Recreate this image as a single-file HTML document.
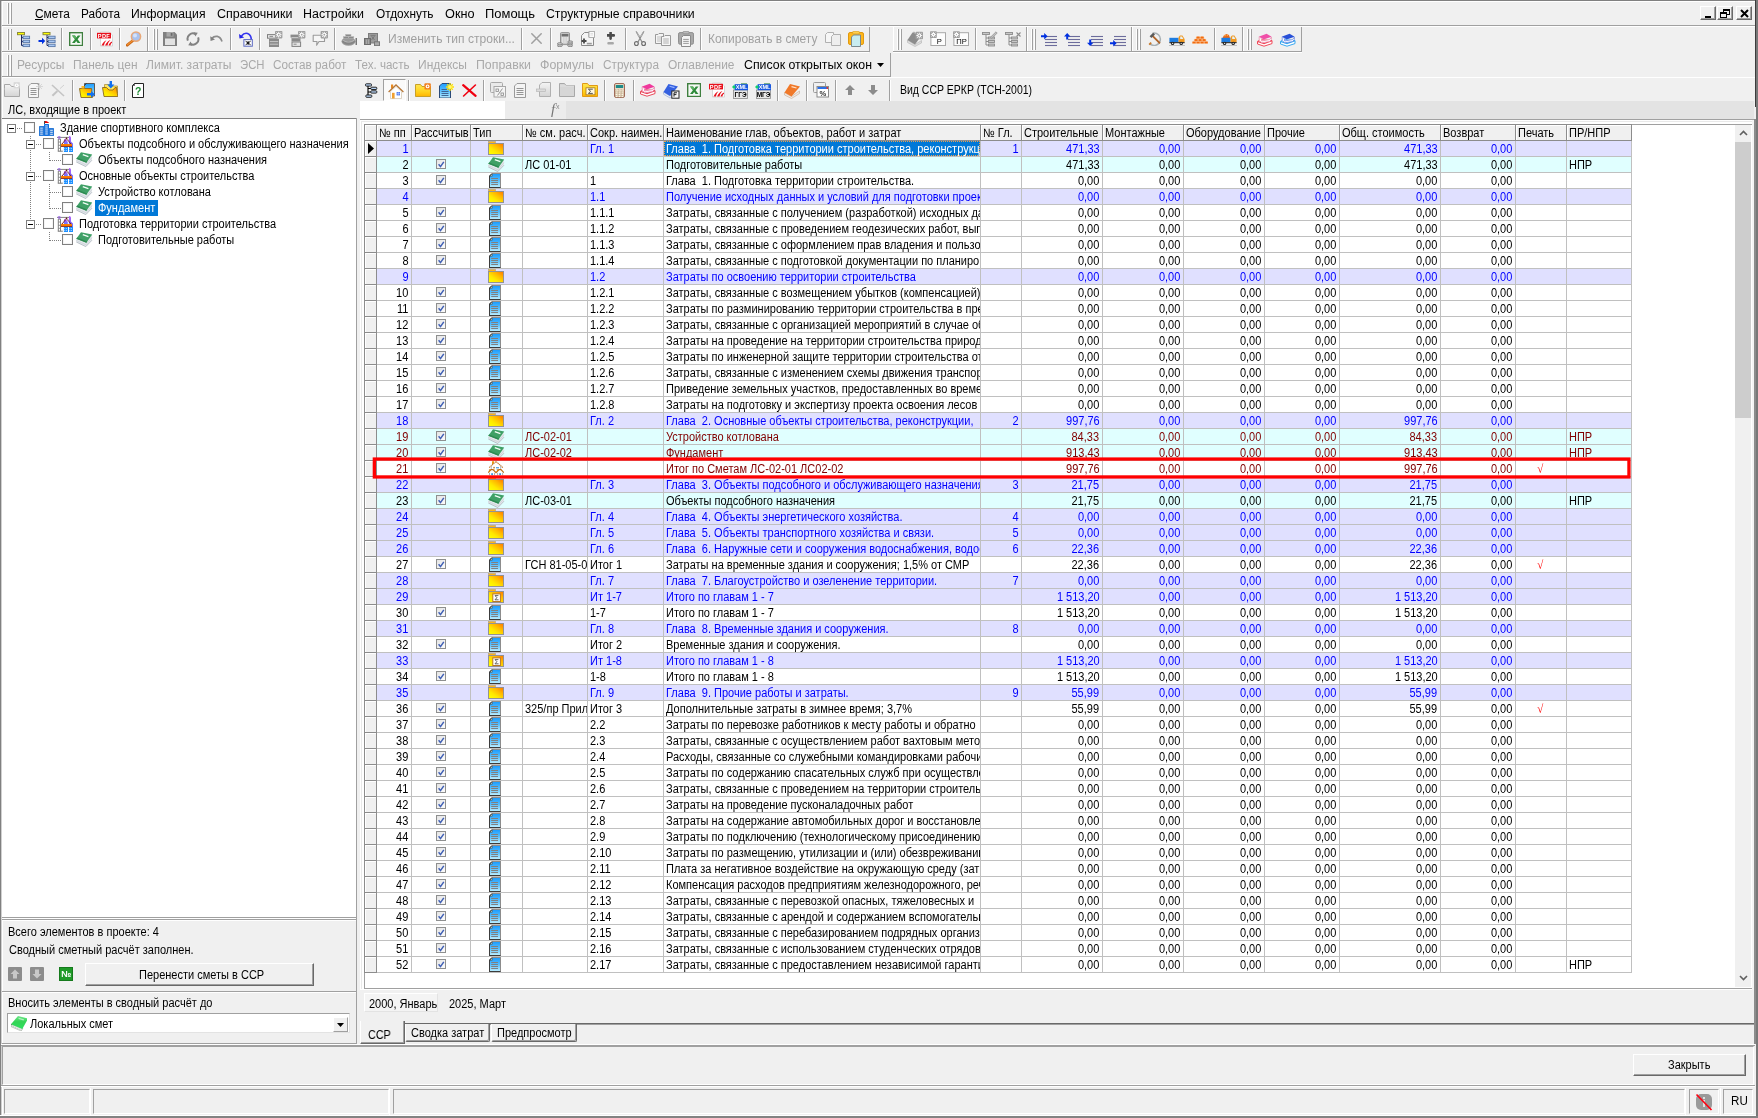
<!DOCTYPE html><html><head><meta charset="utf-8"><title>SSR</title><style>
*{margin:0;padding:0;box-sizing:border-box}
html,body{width:1758px;height:1118px;overflow:hidden;background:#f0f0f0}
body{position:relative;font-family:"Liberation Sans",sans-serif;font-size:12px;color:#000}
div,i,span.t,svg{position:absolute;display:block}
span.t{white-space:pre;transform-origin:0 50%}
span.r{transform-origin:100% 50%}
.c{overflow:hidden}
.ce{width:11px;height:11px;border:1px solid #808080;background:#fff;box-shadow:inset 0 0 0 1px #f4f4f4}
.ex{width:9px;height:9px;border:1px solid #808080;background:#fff}
.rw{left:364px;width:1268px;height:15px}.rw>div{top:0;height:15px;overflow:hidden}.rw span{position:absolute;display:block;top:.5px;font-size:12px;line-height:15px;white-space:pre;transform:scaleX(0.917)}.rw .l{left:1.5px;transform-origin:0 50%}.rw .r{right:2.5px;transform-origin:100% 50%}.rb{background:#e0e0ff;color:#00f}.ry{background:#e0ffff}.rm{color:#800000}.rwh{background:#fff}.ind{left:1px;top:0;width:11px;height:15px;background:#f0f0f0;border-top:1px solid #fff;border-left:1px solid #fff}.hl{left:0;top:15px;width:13px;height:1px;background:#8c8c8c}.gl{left:13px;top:15px;width:1255px;height:1px;background:#c0c0c0}.sq{position:absolute;display:block;left:1173px;top:1px;font-family:"Liberation Serif",serif;font-size:10px;line-height:14px;color:#f00}.k1{left:13px;width:34px}.k2{left:48px;width:58px}.k3{left:107px;width:51px}.k4{left:159px;width:64px}.k5{left:224px;width:75px}.k6{left:300px;width:316px}.k7{left:617px;width:40px}.k8{left:658px;width:80px}.k9{left:739px;width:80px}.k10{left:820px;width:80px}.k11{left:901px;width:74px}.k12{left:976px;width:100px}.k13{left:1077px;width:74px}.k14{left:1152px;width:50px}.k15{left:1203px;width:64px}</style></head><body>
<svg width="0" height="0" style="left:0;top:0"><defs><linearGradient id="gF" x1="0" y1="1" x2="1" y2="0"><stop offset="0" stop-color="#ffff00"/><stop offset="0.35" stop-color="#ffe800"/><stop offset="0.7" stop-color="#ffb400"/><stop offset="1" stop-color="#ff7a00"/></linearGradient><linearGradient id="gS" x1="0" y1="1" x2="1" y2="0"><stop offset="0" stop-color="#ffe860"/><stop offset="1" stop-color="#ffb020"/></linearGradient><linearGradient id="gD" x1="0" y1="0" x2="0" y2="1"><stop offset="0" stop-color="#1c9cff"/><stop offset="0.5" stop-color="#58c0ff"/><stop offset="1" stop-color="#b8ecff"/></linearGradient><linearGradient id="gC" x1="0" y1="0" x2="1" y2="1"><stop offset="0" stop-color="#e2e2e2"/><stop offset="1" stop-color="#fefefe"/></linearGradient><linearGradient id="gP" x1="0" y1="0" x2="0" y2="1"><stop offset="0" stop-color="#b45cf8"/><stop offset="1" stop-color="#6a78ff"/></linearGradient><linearGradient id="gBL" x1="0" y1="0" x2="0" y2="1"><stop offset="0" stop-color="#6ee88a"/><stop offset="0.45" stop-color="#34d455"/><stop offset="1" stop-color="#2fe060"/></linearGradient><linearGradient id="gGy" x1="0" y1="0" x2="0" y2="1"><stop offset="0" stop-color="#f4f4f4"/><stop offset="1" stop-color="#d4d4d4"/></linearGradient><linearGradient id="gYf" x1="0" y1="0" x2="0" y2="1"><stop offset="0" stop-color="#ffe650"/><stop offset="0.6" stop-color="#ffd21e"/><stop offset="1" stop-color="#ffb400"/></linearGradient></defs><symbol id="iBld" viewBox="0 0 15 15"><path d="M5.5 0V3" stroke="#333" stroke-width="0.9"/><path d="M6 0.2C8 -0.2 9 1 10.2 2.1H6Z" fill="#e40000"/><rect x="5" y="3" width="5" height="12" rx="0.6" fill="#1070e0"/><rect x="0" y="4.9" width="5.4" height="10.1" rx="0.6" fill="#2a7ad8"/><rect x="9.6" y="6.9" width="5.4" height="8.1" rx="0.6" fill="#2a7ad8"/><g fill="#ccdcf4"><rect x="6.2" y="4.4" width="2.6" height="1.1"/><rect x="6.2" y="6.4" width="2.6" height="1.1"/><rect x="6.2" y="8.4" width="2.6" height="1.1"/><rect x="6.2" y="10.4" width="2.6" height="1.1"/><rect x="6.2" y="12.4" width="2.6" height="1.1"/><rect x="1.2" y="6.6" width="2.6" height="1.1"/><rect x="1.2" y="8.6" width="2.6" height="1.1"/><rect x="1.2" y="10.6" width="2.6" height="1.1"/><rect x="1.2" y="12.6" width="2.6" height="1.1"/><rect x="11.2" y="8.8" width="2.6" height="1.1"/><rect x="11.2" y="10.8" width="2.6" height="1.1"/><rect x="11.2" y="12.8" width="2.6" height="1.1"/></g></symbol><symbol id="iObj" viewBox="0 0 16 16"><path d="M1.3 3V15.3M3.5 3V15.3" stroke="#808080" stroke-width="1"/><path d="M0.8 15.2H5.8" stroke="#808080" stroke-width="1.1"/><path d="M1.3 3.2H3.5M1.3 6H3.5M1.3 9.3H3.5M1.3 12.3H3.5" stroke="#808080" stroke-width="0.9"/><path d="M0 1.4H12.5" stroke="#808080" stroke-width="1"/><circle cx="2.3" cy="1.5" r="1.1" fill="none" stroke="#9a5cf0" stroke-width="0.9"/><path d="M12 0.2L13 0L14 1.5V5.6L16 7.4V11H11.8Z" fill="url(#gP)"/><path d="M7 3.6L8 3L9.5 4L10.8 6V8H7Z" fill="url(#gP)"/><path d="M9.5 1.6V2.6M9.5 2.4L5 7.9M9.5 2.4L14 7.9" stroke="#6a1420" stroke-width="1.1" stroke-dasharray="1 0.5" fill="none"/><rect x="4" y="8" width="11" height="2.2" fill="#ff7e00"/><rect x="4" y="9.9" width="11" height="1" fill="#8a2a1a"/><rect x="6.9" y="11" width="4.1" height="5" fill="#1e90ff"/><rect x="12" y="11" width="4" height="5" fill="#1e90ff"/><g fill="#d8ecff"><rect x="7.4" y="12.2" width="0.8" height="0.8"/><rect x="7.4" y="14.1" width="0.8" height="0.8"/><rect x="9.2" y="12.2" width="0.8" height="0.8"/><rect x="9.2" y="14.1" width="0.8" height="0.8"/><rect x="12.5" y="12.2" width="0.8" height="0.8"/><rect x="12.5" y="14.1" width="0.8" height="0.8"/><rect x="14.2" y="12.2" width="0.8" height="0.8"/><rect x="14.2" y="14.1" width="0.8" height="0.8"/></g></symbol><symbol id="iBkG" viewBox="0 0 17 15"><path d="M0.3 6.8V10L9.8 14.6L16 8.2V2.6L10.4 10.6Z" fill="#e4e8ec"/><path d="M0.3 10L9.8 14.6L16 8.2" stroke="#b4bcc4" stroke-width="0.9" fill="none"/><path d="M0.3 8.4L9.9 12.8L16 5.6" stroke="#c8d0d6" stroke-width="0.7" fill="none"/><path d="M0.3 6.8L5 0.2L16.2 2.4L10.4 10.8Z" fill="#3fa066"/><path d="M0.3 6.8L10.4 10.8L11.2 9.6L1.2 5.6Z" fill="#2e8a52"/><path d="M6.8 2.6L12.4 4.6" stroke="#f4fff8" stroke-width="1.3"/></symbol><symbol id="iBkC" viewBox="0 0 16 15"><path d="M0 8.2V10.6L10.2 15L11.8 12.6Z" fill="#eef2ee" stroke="#8a968a" stroke-width="0.5"/><path d="M0.4 9.6L10.3 13.8" stroke="#9ab09a" stroke-width="0.6" stroke-dasharray="1.2 0.8"/><path d="M7 0L16 2.2V4.6L11.3 12.9L0 8.2Z" fill="url(#gBL)"/><path d="M0 8.2L0.3 9L1 8.6Z" fill="#1a3a1a"/><path d="M7.6 2.4L12.8 3.8" stroke="#b4f0c0" stroke-width="1.3"/></symbol><symbol id="iFld" viewBox="0 0 16 14"><rect x="0.5" y="0.5" width="7" height="2" fill="#ffb31a" stroke="#b0a078" stroke-width="0.6"/><rect x="0" y="2" width="16" height="12" fill="#939393"/><rect x="1" y="3" width="14" height="10" fill="url(#gF)"/></symbol><symbol id="iChk" viewBox="0 0 10 10"><rect x="0.5" y="0.5" width="9" height="9" fill="url(#gC)" stroke="#8e8f8f" stroke-width="1"/><path d="M2.6 5.2L4.5 7.6L7.8 2.8" stroke="#3f5fb4" stroke-width="1.5" fill="none"/></symbol><symbol id="iDoc" viewBox="0 0 12 15"><path d="M0 3L3 0H12V15H0Z" fill="#8c8c8c"/><path d="M0 3L2.5 0.5V15H0ZM0 14H11.5V15H0Z" fill="#3c3c3c"/><path d="M1 3.5L3.5 1H11V14H1Z" fill="url(#gD)"/><path d="M0.8 3.2L3.2 0.8V3.2Z" fill="#c8f4f4" stroke="#3c3c3c" stroke-width="0.6"/><g fill="#808080"><rect x="2.2" y="5" width="6.8" height="1"/><rect x="2.2" y="7" width="6.8" height="1"/><rect x="2.2" y="9" width="6.8" height="1"/><rect x="2.2" y="11" width="6.8" height="1"/></g></symbol><symbol id="iHs" viewBox="0 0 16 15"><path d="M4 0.2H6V2.2L4 3.8Z" fill="#e89a10"/><path d="M2.8 5.2L8 0.6L13.2 5.2V9H2.8Z" fill="#fff"/><path d="M1.2 6.6L8 0.4L14.8 6.6" stroke="#c07830" stroke-width="1.1" stroke-dasharray="1.4 0.5" fill="none"/><path d="M3.3 5V8.4M12.6 5V8.4" stroke="#a8b4bc" stroke-width="0.9"/><rect x="8" y="6" width="3" height="1" fill="#62a8e0"/><rect x="8" y="7" width="3" height="1.6" fill="#b8dcf4"/><rect x="5.2" y="5.9" width="1.8" height="0.9" fill="#a0602a"/><rect x="5.2" y="6.8" width="1.8" height="2.2" fill="#f0d4a8"/><path d="M1.4 11.4V14.4H6.6V11.4L5 8.8H3ZM9.4 11.4V14.4H14.6V11.4L13 8.8H11Z" fill="#fff"/><path d="M0.2 11.7L3 8.6H5L8 11.7L11 8.6H13L15.9 11.7" stroke="#c06a10" stroke-width="1.2" fill="none"/><path d="M1.4 8.4V10.4L2.8 9.2ZM9.4 8.4V10.4L10.8 9.2Z" fill="#e08a10" stroke="#d07a10" stroke-width="0.6"/><path d="M1.5 11.8V14.3M6.5 11.8V14.3M9.6 11.8V14.3M14.6 11.8V14.3" stroke="#98a8b0" stroke-width="0.9"/><rect x="3.2" y="12.2" width="1.8" height="2" fill="#3a9ae0"/><rect x="11.2" y="12.2" width="1.8" height="2" fill="#3a9ae0"/></symbol><symbol id="iFSum" viewBox="0 0 16 14"><rect x="0.5" y="0.5" width="7" height="2" fill="#ffb31a" stroke="#b0a078" stroke-width="0.6"/><rect x="0" y="2" width="16" height="12" fill="#939393"/><rect x="1" y="3" width="14" height="10" fill="url(#gF)"/><rect x="4.8" y="4.9" width="7.6" height="7.6" fill="#fff" stroke="#b87828" stroke-width="1"/><path d="M10.4 6.6H7L8.9 8.7L7 10.8H10.6" stroke="#555" stroke-width="0.9" fill="none"/></symbol></svg>
<div id="w" style="left:0;top:0;width:1758px;height:1118px;will-change:transform">
<i style="left:0px;top:0px;width:1758px;height:1px;background:#808080"></i>
<i style="left:0px;top:0px;width:1px;height:1118px;background:#808080"></i>
<i style="left:1px;top:1px;width:1px;height:1115px;background:#d0d0d0"></i>
<div style="left:1756px;top:0px;width:2px;height:1118px;background:#787878"></div>
<i style="left:1755px;top:0px;width:1px;height:107px;background:#3c3c3c"></i>
<div style="left:1754px;top:119px;width:2px;height:925px;background:#8c8c8c"></div>
<i style="left:0px;top:1115px;width:1756px;height:1px;background:#fff"></i>
<div style="left:0px;top:1116px;width:1758px;height:2px;background:#828282"></div>
<i style="left:2px;top:1px;width:1753px;height:1px;background:#fff"></i>
<i style="left:2px;top:1px;width:1px;height:1115px;background:#fff"></i>
<i style="left:7px;top:3px;width:1px;height:21px;background:#fff"></i><i style="left:8px;top:3px;width:1px;height:21px;background:#a0a0a0"></i><i style="left:10px;top:3px;width:1px;height:21px;background:#fff"></i><i style="left:11px;top:3px;width:1px;height:21px;background:#a0a0a0"></i>
<i style="left:2px;top:25px;width:1753px;height:1px;background:#a0a0a0"></i>
<i style="left:2px;top:26px;width:1753px;height:1px;background:#fff"></i>
<span class="t" style="left:34.5px;top:6px;font-size:12.5px;line-height:16px;color:#000;transform:scaleX(0.954);">Смета</span>
<span class="t" style="left:80.5px;top:6px;font-size:12.5px;line-height:16px;color:#000;transform:scaleX(0.946);">Работа</span>
<span class="t" style="left:130.5px;top:6px;font-size:12.5px;line-height:16px;color:#000;transform:scaleX(0.973);">Информация</span>
<span class="t" style="left:216.5px;top:6px;font-size:12.5px;line-height:16px;color:#000;transform:scaleX(0.997);">Справочники</span>
<span class="t" style="left:303.0px;top:6px;font-size:12.5px;line-height:16px;color:#000;transform:scaleX(0.995);">Настройки</span>
<span class="t" style="left:375.5px;top:6px;font-size:12.5px;line-height:16px;color:#000;transform:scaleX(0.946);">Отдохнуть</span>
<span class="t" style="left:444.5px;top:6px;font-size:12.5px;line-height:16px;color:#000;transform:scaleX(1.016);">Окно</span>
<span class="t" style="left:485.0px;top:6px;font-size:12.5px;line-height:16px;color:#000;transform:scaleX(1.036);">Помощь</span>
<span class="t" style="left:546.0px;top:6px;font-size:12.5px;line-height:16px;color:#000;transform:scaleX(0.98);">Структурные справочники</span>
<i style="left:35px;top:19px;width:8px;height:1px;background:#000"></i>
<div style="left:1700px;top:6px;width:16px;height:14px;background:#f0f0f0;border:1px solid;border-color:#fff #696969 #696969 #fff;box-shadow:inset -1px -1px 0 #a0a0a0"><i style="left:4px;top:9px;width:6px;height:2px;background:#000"></i></div>
<div style="left:1717px;top:6px;width:16px;height:14px;background:#f0f0f0;border:1px solid;border-color:#fff #696969 #696969 #fff;box-shadow:inset -1px -1px 0 #a0a0a0"><i style="left:5px;top:2px;width:7px;height:6px;border:1px solid #000;border-top-width:2px"></i><i style="left:2px;top:5px;width:7px;height:6px;border:1px solid #000;border-top-width:2px;background:#f0f0f0"></i></div>
<div style="left:1736px;top:6px;width:16px;height:14px;background:#f0f0f0;border:1px solid;border-color:#fff #696969 #696969 #fff;box-shadow:inset -1px -1px 0 #a0a0a0"><svg style="left:3px;top:2px" width="9" height="9" viewBox="0 0 9 9"><path d="M1 1L8 8M8 1L1 8" stroke="#000" stroke-width="2"/></svg></div>
<i style="left:2px;top:51px;width:867px;height:1px;background:#a0a0a0"></i>
<i style="left:2px;top:52px;width:867px;height:1px;background:#fff"></i>
<i style="left:7px;top:29px;width:1px;height:21px;background:#fff"></i><i style="left:8px;top:29px;width:1px;height:21px;background:#a0a0a0"></i><i style="left:10px;top:29px;width:1px;height:21px;background:#fff"></i><i style="left:11px;top:29px;width:1px;height:21px;background:#a0a0a0"></i>
<i style="left:147px;top:27px;width:1px;height:24px;background:#a0a0a0"></i>
<i style="left:148px;top:27px;width:1px;height:24px;background:#fff"></i>
<i style="left:153px;top:29px;width:1px;height:21px;background:#fff"></i><i style="left:154px;top:29px;width:1px;height:21px;background:#a0a0a0"></i><i style="left:156px;top:29px;width:1px;height:21px;background:#fff"></i><i style="left:157px;top:29px;width:1px;height:21px;background:#a0a0a0"></i>
<i style="left:869px;top:27px;width:1px;height:25px;background:#a0a0a0"></i>
<i style="left:893px;top:27px;width:1px;height:25px;background:#fff"></i>
<i style="left:893px;top:51px;width:409px;height:1px;background:#a0a0a0"></i>
<i style="left:893px;top:52px;width:409px;height:1px;background:#fff"></i>
<i style="left:897px;top:29px;width:1px;height:21px;background:#fff"></i><i style="left:898px;top:29px;width:1px;height:21px;background:#a0a0a0"></i><i style="left:900px;top:29px;width:1px;height:21px;background:#fff"></i><i style="left:901px;top:29px;width:1px;height:21px;background:#a0a0a0"></i>
<i style="left:1026px;top:27px;width:1px;height:24px;background:#a0a0a0"></i>
<i style="left:1027px;top:27px;width:1px;height:24px;background:#fff"></i>
<i style="left:1031px;top:29px;width:1px;height:21px;background:#fff"></i><i style="left:1032px;top:29px;width:1px;height:21px;background:#a0a0a0"></i><i style="left:1034px;top:29px;width:1px;height:21px;background:#fff"></i><i style="left:1035px;top:29px;width:1px;height:21px;background:#a0a0a0"></i>
<i style="left:1131px;top:27px;width:1px;height:24px;background:#a0a0a0"></i>
<i style="left:1132px;top:27px;width:1px;height:24px;background:#fff"></i>
<i style="left:1136px;top:29px;width:1px;height:21px;background:#fff"></i><i style="left:1137px;top:29px;width:1px;height:21px;background:#a0a0a0"></i><i style="left:1139px;top:29px;width:1px;height:21px;background:#fff"></i><i style="left:1140px;top:29px;width:1px;height:21px;background:#a0a0a0"></i>
<i style="left:1242px;top:27px;width:1px;height:24px;background:#a0a0a0"></i>
<i style="left:1243px;top:27px;width:1px;height:24px;background:#fff"></i>
<i style="left:1247px;top:29px;width:1px;height:21px;background:#fff"></i><i style="left:1248px;top:29px;width:1px;height:21px;background:#a0a0a0"></i><i style="left:1250px;top:29px;width:1px;height:21px;background:#fff"></i><i style="left:1251px;top:29px;width:1px;height:21px;background:#a0a0a0"></i>
<i style="left:1301px;top:27px;width:1px;height:25px;background:#a0a0a0"></i>
<i style="left:61px;top:28px;width:1px;height:22px;background:#a0a0a0"></i><i style="left:62px;top:28px;width:1px;height:22px;background:#fff"></i>
<i style="left:90px;top:28px;width:1px;height:22px;background:#a0a0a0"></i><i style="left:91px;top:28px;width:1px;height:22px;background:#fff"></i>
<i style="left:119px;top:28px;width:1px;height:22px;background:#a0a0a0"></i><i style="left:120px;top:28px;width:1px;height:22px;background:#fff"></i>
<i style="left:230px;top:28px;width:1px;height:22px;background:#a0a0a0"></i><i style="left:231px;top:28px;width:1px;height:22px;background:#fff"></i>
<i style="left:259px;top:28px;width:1px;height:22px;background:#a0a0a0"></i><i style="left:260px;top:28px;width:1px;height:22px;background:#fff"></i>
<i style="left:334px;top:28px;width:1px;height:22px;background:#a0a0a0"></i><i style="left:335px;top:28px;width:1px;height:22px;background:#fff"></i>
<i style="left:521px;top:28px;width:1px;height:22px;background:#a0a0a0"></i><i style="left:522px;top:28px;width:1px;height:22px;background:#fff"></i>
<i style="left:550px;top:28px;width:1px;height:22px;background:#a0a0a0"></i><i style="left:551px;top:28px;width:1px;height:22px;background:#fff"></i>
<i style="left:625px;top:28px;width:1px;height:22px;background:#a0a0a0"></i><i style="left:626px;top:28px;width:1px;height:22px;background:#fff"></i>
<i style="left:700px;top:28px;width:1px;height:22px;background:#a0a0a0"></i><i style="left:701px;top:28px;width:1px;height:22px;background:#fff"></i>
<i style="left:975px;top:28px;width:1px;height:22px;background:#a0a0a0"></i><i style="left:976px;top:28px;width:1px;height:22px;background:#fff"></i>
<i style="left:1214px;top:28px;width:1px;height:22px;background:#a0a0a0"></i><i style="left:1215px;top:28px;width:1px;height:22px;background:#fff"></i>
<span class="t" style="left:387.5px;top:31px;font-size:12.5px;line-height:16px;color:#a0a0a0;transform:scaleX(0.965);">Изменить тип строки...</span>
<span class="t" style="left:708px;top:31px;font-size:12.5px;line-height:16px;color:#a0a0a0;transform:scaleX(0.957);">Копировать в смету</span>
<i style="left:7px;top:55px;width:1px;height:21px;background:#fff"></i><i style="left:8px;top:55px;width:1px;height:21px;background:#a0a0a0"></i><i style="left:10px;top:55px;width:1px;height:21px;background:#fff"></i><i style="left:11px;top:55px;width:1px;height:21px;background:#a0a0a0"></i>
<i style="left:2px;top:76px;width:888px;height:1px;background:#a0a0a0"></i>
<i style="left:2px;top:77px;width:1753px;height:1px;background:#fff"></i>
<i style="left:890px;top:53px;width:1px;height:24px;background:#a0a0a0"></i>
<span class="t" style="left:16.5px;top:57px;font-size:12.5px;line-height:16px;color:#a9a9a9;transform:scaleX(0.964);">Ресурсы</span>
<span class="t" style="left:72.5px;top:57px;font-size:12.5px;line-height:16px;color:#a9a9a9;transform:scaleX(0.955);">Панель цен</span>
<span class="t" style="left:145.5px;top:57px;font-size:12.5px;line-height:16px;color:#a9a9a9;transform:scaleX(0.966);">Лимит. затраты</span>
<span class="t" style="left:239.5px;top:57px;font-size:12.5px;line-height:16px;color:#a9a9a9;transform:scaleX(0.906);">ЭСН</span>
<span class="t" style="left:272.5px;top:57px;font-size:12.5px;line-height:16px;color:#a9a9a9;transform:scaleX(0.938);">Состав работ</span>
<span class="t" style="left:354.5px;top:57px;font-size:12.5px;line-height:16px;color:#a9a9a9;transform:scaleX(0.928);">Тех. часть</span>
<span class="t" style="left:417.5px;top:57px;font-size:12.5px;line-height:16px;color:#a9a9a9;transform:scaleX(0.961);">Индексы</span>
<span class="t" style="left:475.5px;top:57px;font-size:12.5px;line-height:16px;color:#a9a9a9;transform:scaleX(0.987);">Поправки</span>
<span class="t" style="left:539.5px;top:57px;font-size:12.5px;line-height:16px;color:#a9a9a9;transform:scaleX(0.993);">Формулы</span>
<span class="t" style="left:602.5px;top:57px;font-size:12.5px;line-height:16px;color:#a9a9a9;transform:scaleX(0.944);">Структура</span>
<span class="t" style="left:667.5px;top:57px;font-size:12.5px;line-height:16px;color:#a9a9a9;transform:scaleX(0.954);">Оглавление</span>
<span class="t" style="left:744px;top:57px;font-size:12.5px;line-height:16px;color:#000;transform:scaleX(0.987);">Список открытых окон</span>
<svg style="left:877px;top:63px" width="7" height="4" viewBox="0 0 7 4"><path d="M0 0H7L3.5 4Z" fill="#000"/></svg>
<span class="t" style="left:8px;top:103px;font-size:12px;line-height:15px;color:#000;transform:scaleX(0.917);">ЛС, входящие в проект</span>
<div style="left:2px;top:118px;width:355px;height:800px;background:#fff;border:1px solid #828282;border-left:0;border-bottom-color:#a0a0a0"></div>
<i class="ex" style="left:7px;top:124px"></i><i style="left:9px;top:128px;width:5px;height:1px;background:#000"></i>
<i style="left:17px;top:128px;width:6px;height:1px;background:repeating-linear-gradient(90deg,#808080 0 1px,transparent 1px 2px)"></i>
<i class="ce" style="left:24px;top:122px"></i>
<svg style="left:39px;top:121px" width="15" height="15"><use href="#iBld"/></svg>
<span class="t" style="left:60px;top:121px;font-size:12px;line-height:15px;color:#000;transform:scaleX(0.917);">Здание спортивного комплекса</span>
<i class="ex" style="left:26px;top:140px"></i><i style="left:28px;top:144px;width:5px;height:1px;background:#000"></i>
<i style="left:36px;top:144px;width:6px;height:1px;background:repeating-linear-gradient(90deg,#808080 0 1px,transparent 1px 2px)"></i>
<i class="ce" style="left:43px;top:138px"></i>
<svg style="left:57px;top:136px" width="16" height="16"><use href="#iObj"/></svg>
<span class="t" style="left:78.5px;top:137px;font-size:12px;line-height:15px;color:#000;transform:scaleX(0.917);">Объекты подсобного и обслуживающего назначения</span>
<i style="left:50px;top:160px;width:11px;height:1px;background:repeating-linear-gradient(90deg,#808080 0 1px,transparent 1px 2px)"></i>
<i class="ce" style="left:62px;top:154px"></i>
<svg style="left:76px;top:152px" width="17" height="15"><use href="#iBkG"/></svg>
<span class="t" style="left:97.5px;top:153px;font-size:12px;line-height:15px;color:#000;transform:scaleX(0.917);">Объекты подсобного назначения</span>
<i class="ex" style="left:26px;top:172px"></i><i style="left:28px;top:176px;width:5px;height:1px;background:#000"></i>
<i style="left:36px;top:176px;width:6px;height:1px;background:repeating-linear-gradient(90deg,#808080 0 1px,transparent 1px 2px)"></i>
<i class="ce" style="left:43px;top:170px"></i>
<svg style="left:57px;top:168px" width="16" height="16"><use href="#iObj"/></svg>
<span class="t" style="left:78.5px;top:169px;font-size:12px;line-height:15px;color:#000;transform:scaleX(0.917);">Основные объекты строительства</span>
<i style="left:50px;top:192px;width:11px;height:1px;background:repeating-linear-gradient(90deg,#808080 0 1px,transparent 1px 2px)"></i>
<i class="ce" style="left:62px;top:186px"></i>
<svg style="left:76px;top:184px" width="17" height="15"><use href="#iBkG"/></svg>
<span class="t" style="left:97.5px;top:185px;font-size:12px;line-height:15px;color:#000;transform:scaleX(0.917);">Устройство котлована</span>
<i style="left:50px;top:208px;width:11px;height:1px;background:repeating-linear-gradient(90deg,#808080 0 1px,transparent 1px 2px)"></i>
<i class="ce" style="left:62px;top:202px"></i>
<svg style="left:76px;top:200px" width="17" height="15"><use href="#iBkG"/></svg>
<div style="left:95px;top:200px;width:63px;height:16px;background:#0078d7"></div>
<span class="t" style="left:97.5px;top:201px;font-size:12px;line-height:15px;color:#fff;transform:scaleX(0.917);">Фундамент</span>
<i class="ex" style="left:26px;top:220px"></i><i style="left:28px;top:224px;width:5px;height:1px;background:#000"></i>
<i style="left:36px;top:224px;width:6px;height:1px;background:repeating-linear-gradient(90deg,#808080 0 1px,transparent 1px 2px)"></i>
<i class="ce" style="left:43px;top:218px"></i>
<svg style="left:57px;top:216px" width="16" height="16"><use href="#iObj"/></svg>
<span class="t" style="left:78.5px;top:217px;font-size:12px;line-height:15px;color:#000;transform:scaleX(0.917);">Подготовка территории строительства</span>
<i style="left:50px;top:240px;width:11px;height:1px;background:repeating-linear-gradient(90deg,#808080 0 1px,transparent 1px 2px)"></i>
<i class="ce" style="left:62px;top:234px"></i>
<svg style="left:76px;top:232px" width="17" height="15"><use href="#iBkG"/></svg>
<span class="t" style="left:97.5px;top:233px;font-size:12px;line-height:15px;color:#000;transform:scaleX(0.917);">Подготовительные работы</span>
<i style="left:30px;top:136px;width:1px;height:4px;background:repeating-linear-gradient(180deg,#808080 0 1px,transparent 1px 2px)"></i>
<i style="left:30px;top:150px;width:1px;height:22px;background:repeating-linear-gradient(180deg,#808080 0 1px,transparent 1px 2px)"></i>
<i style="left:30px;top:182px;width:1px;height:38px;background:repeating-linear-gradient(180deg,#808080 0 1px,transparent 1px 2px)"></i>
<i style="left:49px;top:152px;width:1px;height:9px;background:repeating-linear-gradient(180deg,#808080 0 1px,transparent 1px 2px)"></i>
<i style="left:49px;top:184px;width:1px;height:25px;background:repeating-linear-gradient(180deg,#808080 0 1px,transparent 1px 2px)"></i>
<i style="left:49px;top:232px;width:1px;height:9px;background:repeating-linear-gradient(180deg,#808080 0 1px,transparent 1px 2px)"></i>
<i style="left:2px;top:918px;width:354px;height:1px;background:#fff"></i>
<i style="left:2px;top:919px;width:354px;height:1px;background:#a0a0a0"></i>
<i style="left:2px;top:920px;width:354px;height:1px;background:#fff"></i>
<span class="t" style="left:7.5px;top:924.5px;font-size:12px;line-height:15px;color:#000;transform:scaleX(0.917);">Всего элементов в проекте: 4</span>
<span class="t" style="left:8.5px;top:942.5px;font-size:12px;line-height:15px;color:#000;transform:scaleX(0.917);">Сводный сметный расчёт заполнен.</span>
<div style="left:8px;top:967px;width:14px;height:14px;background:#8c8c8c;border-radius:1px"><svg style="left:2px;top:2px" width="10" height="10" viewBox="0 0 10 10"><path d="M5 0.5L9.5 5H7V9.5H3V5H0.5Z" fill="#c8c8c8"/></svg></div>
<div style="left:30px;top:967px;width:14px;height:14px;background:#8c8c8c;border-radius:1px"><svg style="left:2px;top:2px" width="10" height="10" viewBox="0 0 10 10"><path d="M5 9.5L9.5 5H7V0.5H3V5H0.5Z" fill="#c8c8c8"/></svg></div>
<div style="left:59px;top:967px;width:14px;height:14px;background:#1f9a28;border:1px solid #157a1c;color:#fff;font-weight:bold;font-size:9px;line-height:12px;text-align:center">№</div>
<div style="left:85px;top:963px;width:229px;height:23px;background:#f0f0f0;border:1px solid;border-color:#fff #696969 #696969 #fff;box-shadow:inset -1px -1px 0 #a0a0a0"></div>
<span class="t" style="left:138.5px;top:968px;font-size:12px;line-height:15px;color:#000;transform:scaleX(0.917);">Перенести сметы в ССР</span>
<i style="left:2px;top:991px;width:354px;height:1px;background:#a0a0a0"></i>
<i style="left:2px;top:992px;width:354px;height:1px;background:#fff"></i>
<span class="t" style="left:7.5px;top:995.5px;font-size:12px;line-height:15px;color:#000;transform:scaleX(0.917);">Вносить элементы в сводный расчёт до</span>
<div style="left:7px;top:1013px;width:343px;height:20px;background:#fff;border:1px solid;border-color:#a0a0a0 #e3e3e3 #e3e3e3 #a0a0a0"></div>
<svg style="left:11px;top:1016px" width="16" height="15"><use href="#iBkC"/></svg>
<span class="t" style="left:29.5px;top:1017px;font-size:12px;line-height:15px;color:#000;transform:scaleX(0.917);">Локальных смет</span>
<div style="left:333px;top:1017px;width:15px;height:15px;background:#f0f0f0;border:1px solid;border-color:#fff #a0a0a0 #a0a0a0 #fff"><svg style="left:3px;top:5px" width="7" height="4" viewBox="0 0 7 4"><path d="M0 0H7L3.5 4Z" fill="#000"/></svg></div>
<i style="left:356px;top:118px;width:1px;height:926px;background:#a0a0a0"></i>
<i style="left:2px;top:1043px;width:355px;height:1px;background:#a0a0a0"></i>
<div style="left:360px;top:101px;width:145px;height:18px;background:#fff"></div>
<div style="left:505px;top:101px;width:61px;height:18px;background:#ececec"></div>
<div style="left:566px;top:101px;width:1188px;height:18px;background:#e3e3e3"></div>
<span class="t" style="left:551px;top:101px;font-family:'Liberation Serif',serif;font-style:italic;font-size:15px;line-height:17px;color:#777">f</span>
<span class="t" style="left:556px;top:103px;font-size:7px;line-height:8px;color:#888">x</span>
<i style="left:360px;top:119px;width:1394px;height:1px;background:#a0a0a0"></i>
<div style="left:360px;top:120px;width:1394px;height:869px;background:#fff"></div>
<i style="left:361px;top:121px;width:1392px;height:1px;background:#e9e9e9"></i>
<i style="left:361px;top:121px;width:1px;height:868px;background:#e9e9e9"></i>
<div style="left:364px;top:124px;width:1388px;height:865px;border:1px solid #a0a0a0;border-right:0"></div>
<i style="left:360px;top:989px;width:1394px;height:1px;background:#fff"></i>
<div style="left:1752px;top:120px;width:2px;height:870px;background:#f4f4f4"></div>
<div style="left:364px;top:124px;width:1268px;height:17px;background:#f0f0f0"></div>
<i style="left:364px;top:124px;width:1268px;height:1px;background:#8c8c8c"></i>
<i style="left:364px;top:140px;width:1268px;height:1px;background:#8c8c8c"></i>
<i style="left:364px;top:124px;width:1px;height:17px;background:#8c8c8c"></i>
<i style="left:365px;top:125px;width:1px;height:15px;background:#fff"></i>
<i style="left:365px;top:125px;width:11px;height:1px;background:#fff"></i>
<i style="left:376px;top:124px;width:1px;height:17px;background:#8c8c8c"></i>
<i style="left:377px;top:125px;width:1px;height:15px;background:#fff"></i>
<i style="left:377px;top:125px;width:34px;height:1px;background:#fff"></i>
<i style="left:411px;top:124px;width:1px;height:17px;background:#8c8c8c"></i>
<i style="left:412px;top:125px;width:1px;height:15px;background:#fff"></i>
<i style="left:412px;top:125px;width:58px;height:1px;background:#fff"></i>
<i style="left:470px;top:124px;width:1px;height:17px;background:#8c8c8c"></i>
<i style="left:471px;top:125px;width:1px;height:15px;background:#fff"></i>
<i style="left:471px;top:125px;width:51px;height:1px;background:#fff"></i>
<i style="left:522px;top:124px;width:1px;height:17px;background:#8c8c8c"></i>
<i style="left:523px;top:125px;width:1px;height:15px;background:#fff"></i>
<i style="left:523px;top:125px;width:64px;height:1px;background:#fff"></i>
<i style="left:587px;top:124px;width:1px;height:17px;background:#8c8c8c"></i>
<i style="left:588px;top:125px;width:1px;height:15px;background:#fff"></i>
<i style="left:588px;top:125px;width:75px;height:1px;background:#fff"></i>
<i style="left:663px;top:124px;width:1px;height:17px;background:#8c8c8c"></i>
<i style="left:664px;top:125px;width:1px;height:15px;background:#fff"></i>
<i style="left:664px;top:125px;width:316px;height:1px;background:#fff"></i>
<i style="left:980px;top:124px;width:1px;height:17px;background:#8c8c8c"></i>
<i style="left:981px;top:125px;width:1px;height:15px;background:#fff"></i>
<i style="left:981px;top:125px;width:40px;height:1px;background:#fff"></i>
<i style="left:1021px;top:124px;width:1px;height:17px;background:#8c8c8c"></i>
<i style="left:1022px;top:125px;width:1px;height:15px;background:#fff"></i>
<i style="left:1022px;top:125px;width:80px;height:1px;background:#fff"></i>
<i style="left:1102px;top:124px;width:1px;height:17px;background:#8c8c8c"></i>
<i style="left:1103px;top:125px;width:1px;height:15px;background:#fff"></i>
<i style="left:1103px;top:125px;width:80px;height:1px;background:#fff"></i>
<i style="left:1183px;top:124px;width:1px;height:17px;background:#8c8c8c"></i>
<i style="left:1184px;top:125px;width:1px;height:15px;background:#fff"></i>
<i style="left:1184px;top:125px;width:80px;height:1px;background:#fff"></i>
<i style="left:1264px;top:124px;width:1px;height:17px;background:#8c8c8c"></i>
<i style="left:1265px;top:125px;width:1px;height:15px;background:#fff"></i>
<i style="left:1265px;top:125px;width:74px;height:1px;background:#fff"></i>
<i style="left:1339px;top:124px;width:1px;height:17px;background:#8c8c8c"></i>
<i style="left:1340px;top:125px;width:1px;height:15px;background:#fff"></i>
<i style="left:1340px;top:125px;width:100px;height:1px;background:#fff"></i>
<i style="left:1440px;top:124px;width:1px;height:17px;background:#8c8c8c"></i>
<i style="left:1441px;top:125px;width:1px;height:15px;background:#fff"></i>
<i style="left:1441px;top:125px;width:74px;height:1px;background:#fff"></i>
<i style="left:1515px;top:124px;width:1px;height:17px;background:#8c8c8c"></i>
<i style="left:1516px;top:125px;width:1px;height:15px;background:#fff"></i>
<i style="left:1516px;top:125px;width:50px;height:1px;background:#fff"></i>
<i style="left:1566px;top:124px;width:1px;height:17px;background:#8c8c8c"></i>
<i style="left:1567px;top:125px;width:1px;height:15px;background:#fff"></i>
<i style="left:1567px;top:125px;width:64px;height:1px;background:#fff"></i>
<i style="left:1631px;top:124px;width:1px;height:17px;background:#8c8c8c"></i>
<div class="c" style="left:377px;top:125px;width:34px;height:15px"><span class="t" style="left:1.5px;top:0.5px;font-size:12px;line-height:15px;color:#000;transform:scaleX(0.917);">№ пп</span></div>
<div class="c" style="left:412px;top:125px;width:58px;height:15px"><span class="t" style="left:1.5px;top:0.5px;font-size:12px;line-height:15px;color:#000;transform:scaleX(0.917);">Рассчитыв</span></div>
<div class="c" style="left:471px;top:125px;width:51px;height:15px"><span class="t" style="left:1.5px;top:0.5px;font-size:12px;line-height:15px;color:#000;transform:scaleX(0.917);">Тип</span></div>
<div class="c" style="left:523px;top:125px;width:64px;height:15px"><span class="t" style="left:1.5px;top:0.5px;font-size:12px;line-height:15px;color:#000;transform:scaleX(0.917);">№ см. расч.</span></div>
<div class="c" style="left:588px;top:125px;width:75px;height:15px"><span class="t" style="left:1.5px;top:0.5px;font-size:12px;line-height:15px;color:#000;transform:scaleX(0.917);">Сокр. наимен.</span></div>
<div class="c" style="left:664px;top:125px;width:316px;height:15px"><span class="t" style="left:1.5px;top:0.5px;font-size:12px;line-height:15px;color:#000;transform:scaleX(0.917);">Наименование глав, объектов, работ и затрат</span></div>
<div class="c" style="left:981px;top:125px;width:40px;height:15px"><span class="t" style="left:1.5px;top:0.5px;font-size:12px;line-height:15px;color:#000;transform:scaleX(0.917);">№ Гл.</span></div>
<div class="c" style="left:1022px;top:125px;width:80px;height:15px"><span class="t" style="left:1.5px;top:0.5px;font-size:12px;line-height:15px;color:#000;transform:scaleX(0.917);">Строительные</span></div>
<div class="c" style="left:1103px;top:125px;width:80px;height:15px"><span class="t" style="left:1.5px;top:0.5px;font-size:12px;line-height:15px;color:#000;transform:scaleX(0.917);">Монтажные</span></div>
<div class="c" style="left:1184px;top:125px;width:80px;height:15px"><span class="t" style="left:1.5px;top:0.5px;font-size:12px;line-height:15px;color:#000;transform:scaleX(0.917);">Оборудование</span></div>
<div class="c" style="left:1265px;top:125px;width:74px;height:15px"><span class="t" style="left:1.5px;top:0.5px;font-size:12px;line-height:15px;color:#000;transform:scaleX(0.917);">Прочие</span></div>
<div class="c" style="left:1340px;top:125px;width:100px;height:15px"><span class="t" style="left:1.5px;top:0.5px;font-size:12px;line-height:15px;color:#000;transform:scaleX(0.917);">Общ. стоимость</span></div>
<div class="c" style="left:1441px;top:125px;width:74px;height:15px"><span class="t" style="left:1.5px;top:0.5px;font-size:12px;line-height:15px;color:#000;transform:scaleX(0.917);">Возврат</span></div>
<div class="c" style="left:1516px;top:125px;width:50px;height:15px"><span class="t" style="left:1.5px;top:0.5px;font-size:12px;line-height:15px;color:#000;transform:scaleX(0.917);">Печать</span></div>
<div class="c" style="left:1567px;top:125px;width:64px;height:15px"><span class="t" style="left:1.5px;top:0.5px;font-size:12px;line-height:15px;color:#000;transform:scaleX(0.917);">ПР/НПР</span></div>
<div class="rw rb" style="top:141px"><i class="ind"></i><i class="hl"></i><i class="gl"></i><div class="k1"><span class="r">1</span></div><div class="k5"><span class="l">Гл. 1</span></div><div class="k6" style="background:#0078d7;color:#fff;outline:1px dotted #e8a050;outline-offset:-1px"><span class="l">Глава  1. Подготовка территории строительства, реконструкции</span></div><div class="k7"><span class="r">1</span></div><div class="k8"><span class="r">471,33</span></div><div class="k9"><span class="r">0,00</span></div><div class="k10"><span class="r">0,00</span></div><div class="k11"><span class="r">0,00</span></div><div class="k12"><span class="r">471,33</span></div><div class="k13"><span class="r">0,00</span></div></div>
<svg style="left:488px;top:141px" width="16" height="14"><use href="#iFld"/></svg>
<div class="rw ry" style="top:157px"><i class="ind"></i><i class="hl"></i><i class="gl"></i><div class="k1"><span class="r">2</span></div><div class="k4"><span class="l">ЛС 01-01</span></div><div class="k6"><span class="l">Подготовительные работы</span></div><div class="k8"><span class="r">471,33</span></div><div class="k9"><span class="r">0,00</span></div><div class="k10"><span class="r">0,00</span></div><div class="k11"><span class="r">0,00</span></div><div class="k12"><span class="r">471,33</span></div><div class="k13"><span class="r">0,00</span></div><div class="k15"><span class="l">НПР</span></div></div>
<svg style="left:436px;top:159px" width="10" height="10"><use href="#iChk"/></svg>
<svg style="left:488px;top:157px" width="17" height="15"><use href="#iBkG"/></svg>
<div class="rw rwh" style="top:173px"><i class="ind"></i><i class="hl"></i><i class="gl"></i><div class="k1"><span class="r">3</span></div><div class="k5"><span class="l">1</span></div><div class="k6"><span class="l">Глава  1. Подготовка территории строительства.</span></div><div class="k8"><span class="r">0,00</span></div><div class="k9"><span class="r">0,00</span></div><div class="k10"><span class="r">0,00</span></div><div class="k11"><span class="r">0,00</span></div><div class="k12"><span class="r">0,00</span></div><div class="k13"><span class="r">0,00</span></div></div>
<svg style="left:436px;top:175px" width="10" height="10"><use href="#iChk"/></svg>
<svg style="left:489px;top:173px" width="12" height="15"><use href="#iDoc"/></svg>
<div class="rw rb" style="top:189px"><i class="ind"></i><i class="hl"></i><i class="gl"></i><div class="k1"><span class="r">4</span></div><div class="k5"><span class="l">1.1</span></div><div class="k6"><span class="l">Получение исходных данных и условий для подготовки проектной</span></div><div class="k8"><span class="r">0,00</span></div><div class="k9"><span class="r">0,00</span></div><div class="k10"><span class="r">0,00</span></div><div class="k11"><span class="r">0,00</span></div><div class="k12"><span class="r">0,00</span></div><div class="k13"><span class="r">0,00</span></div></div>
<svg style="left:488px;top:189px" width="16" height="14"><use href="#iFld"/></svg>
<div class="rw rwh" style="top:205px"><i class="ind"></i><i class="hl"></i><i class="gl"></i><div class="k1"><span class="r">5</span></div><div class="k5"><span class="l">1.1.1</span></div><div class="k6"><span class="l">Затраты, связанные с получением (разработкой) исходных данных</span></div><div class="k8"><span class="r">0,00</span></div><div class="k9"><span class="r">0,00</span></div><div class="k10"><span class="r">0,00</span></div><div class="k11"><span class="r">0,00</span></div><div class="k12"><span class="r">0,00</span></div><div class="k13"><span class="r">0,00</span></div></div>
<svg style="left:436px;top:207px" width="10" height="10"><use href="#iChk"/></svg>
<svg style="left:489px;top:205px" width="12" height="15"><use href="#iDoc"/></svg>
<div class="rw rwh" style="top:221px"><i class="ind"></i><i class="hl"></i><i class="gl"></i><div class="k1"><span class="r">6</span></div><div class="k5"><span class="l">1.1.2</span></div><div class="k6"><span class="l">Затраты, связанные с проведением геодезических работ, выполн</span></div><div class="k8"><span class="r">0,00</span></div><div class="k9"><span class="r">0,00</span></div><div class="k10"><span class="r">0,00</span></div><div class="k11"><span class="r">0,00</span></div><div class="k12"><span class="r">0,00</span></div><div class="k13"><span class="r">0,00</span></div></div>
<svg style="left:436px;top:223px" width="10" height="10"><use href="#iChk"/></svg>
<svg style="left:489px;top:221px" width="12" height="15"><use href="#iDoc"/></svg>
<div class="rw rwh" style="top:237px"><i class="ind"></i><i class="hl"></i><i class="gl"></i><div class="k1"><span class="r">7</span></div><div class="k5"><span class="l">1.1.3</span></div><div class="k6"><span class="l">Затраты, связанные с оформлением прав владения и пользования</span></div><div class="k8"><span class="r">0,00</span></div><div class="k9"><span class="r">0,00</span></div><div class="k10"><span class="r">0,00</span></div><div class="k11"><span class="r">0,00</span></div><div class="k12"><span class="r">0,00</span></div><div class="k13"><span class="r">0,00</span></div></div>
<svg style="left:436px;top:239px" width="10" height="10"><use href="#iChk"/></svg>
<svg style="left:489px;top:237px" width="12" height="15"><use href="#iDoc"/></svg>
<div class="rw rwh" style="top:253px"><i class="ind"></i><i class="hl"></i><i class="gl"></i><div class="k1"><span class="r">8</span></div><div class="k5"><span class="l">1.1.4</span></div><div class="k6"><span class="l">Затраты, связанные с подготовкой документации по планировке</span></div><div class="k8"><span class="r">0,00</span></div><div class="k9"><span class="r">0,00</span></div><div class="k10"><span class="r">0,00</span></div><div class="k11"><span class="r">0,00</span></div><div class="k12"><span class="r">0,00</span></div><div class="k13"><span class="r">0,00</span></div></div>
<svg style="left:436px;top:255px" width="10" height="10"><use href="#iChk"/></svg>
<svg style="left:489px;top:253px" width="12" height="15"><use href="#iDoc"/></svg>
<div class="rw rb" style="top:269px"><i class="ind"></i><i class="hl"></i><i class="gl"></i><div class="k1"><span class="r">9</span></div><div class="k5"><span class="l">1.2</span></div><div class="k6"><span class="l">Затраты по освоению территории строительства</span></div><div class="k8"><span class="r">0,00</span></div><div class="k9"><span class="r">0,00</span></div><div class="k10"><span class="r">0,00</span></div><div class="k11"><span class="r">0,00</span></div><div class="k12"><span class="r">0,00</span></div><div class="k13"><span class="r">0,00</span></div></div>
<svg style="left:488px;top:269px" width="16" height="14"><use href="#iFld"/></svg>
<div class="rw rwh" style="top:285px"><i class="ind"></i><i class="hl"></i><i class="gl"></i><div class="k1"><span class="r">10</span></div><div class="k5"><span class="l">1.2.1</span></div><div class="k6"><span class="l">Затраты, связанные с возмещением убытков (компенсацией)</span></div><div class="k8"><span class="r">0,00</span></div><div class="k9"><span class="r">0,00</span></div><div class="k10"><span class="r">0,00</span></div><div class="k11"><span class="r">0,00</span></div><div class="k12"><span class="r">0,00</span></div><div class="k13"><span class="r">0,00</span></div></div>
<svg style="left:436px;top:287px" width="10" height="10"><use href="#iChk"/></svg>
<svg style="left:489px;top:285px" width="12" height="15"><use href="#iDoc"/></svg>
<div class="rw rwh" style="top:301px"><i class="ind"></i><i class="hl"></i><i class="gl"></i><div class="k1"><span class="r">11</span></div><div class="k5"><span class="l">1.2.2</span></div><div class="k6"><span class="l">Затраты по разминированию территории строительства в пред</span></div><div class="k8"><span class="r">0,00</span></div><div class="k9"><span class="r">0,00</span></div><div class="k10"><span class="r">0,00</span></div><div class="k11"><span class="r">0,00</span></div><div class="k12"><span class="r">0,00</span></div><div class="k13"><span class="r">0,00</span></div></div>
<svg style="left:436px;top:303px" width="10" height="10"><use href="#iChk"/></svg>
<svg style="left:489px;top:301px" width="12" height="15"><use href="#iDoc"/></svg>
<div class="rw rwh" style="top:317px"><i class="ind"></i><i class="hl"></i><i class="gl"></i><div class="k1"><span class="r">12</span></div><div class="k5"><span class="l">1.2.3</span></div><div class="k6"><span class="l">Затраты, связанные с организацией мероприятий в случае об</span></div><div class="k8"><span class="r">0,00</span></div><div class="k9"><span class="r">0,00</span></div><div class="k10"><span class="r">0,00</span></div><div class="k11"><span class="r">0,00</span></div><div class="k12"><span class="r">0,00</span></div><div class="k13"><span class="r">0,00</span></div></div>
<svg style="left:436px;top:319px" width="10" height="10"><use href="#iChk"/></svg>
<svg style="left:489px;top:317px" width="12" height="15"><use href="#iDoc"/></svg>
<div class="rw rwh" style="top:333px"><i class="ind"></i><i class="hl"></i><i class="gl"></i><div class="k1"><span class="r">13</span></div><div class="k5"><span class="l">1.2.4</span></div><div class="k6"><span class="l">Затраты на проведение на территории строительства природо</span></div><div class="k8"><span class="r">0,00</span></div><div class="k9"><span class="r">0,00</span></div><div class="k10"><span class="r">0,00</span></div><div class="k11"><span class="r">0,00</span></div><div class="k12"><span class="r">0,00</span></div><div class="k13"><span class="r">0,00</span></div></div>
<svg style="left:436px;top:335px" width="10" height="10"><use href="#iChk"/></svg>
<svg style="left:489px;top:333px" width="12" height="15"><use href="#iDoc"/></svg>
<div class="rw rwh" style="top:349px"><i class="ind"></i><i class="hl"></i><i class="gl"></i><div class="k1"><span class="r">14</span></div><div class="k5"><span class="l">1.2.5</span></div><div class="k6"><span class="l">Затраты по инженерной защите территории строительства от</span></div><div class="k8"><span class="r">0,00</span></div><div class="k9"><span class="r">0,00</span></div><div class="k10"><span class="r">0,00</span></div><div class="k11"><span class="r">0,00</span></div><div class="k12"><span class="r">0,00</span></div><div class="k13"><span class="r">0,00</span></div></div>
<svg style="left:436px;top:351px" width="10" height="10"><use href="#iChk"/></svg>
<svg style="left:489px;top:349px" width="12" height="15"><use href="#iDoc"/></svg>
<div class="rw rwh" style="top:365px"><i class="ind"></i><i class="hl"></i><i class="gl"></i><div class="k1"><span class="r">15</span></div><div class="k5"><span class="l">1.2.6</span></div><div class="k6"><span class="l">Затраты, связанные с изменением схемы движения транспорта</span></div><div class="k8"><span class="r">0,00</span></div><div class="k9"><span class="r">0,00</span></div><div class="k10"><span class="r">0,00</span></div><div class="k11"><span class="r">0,00</span></div><div class="k12"><span class="r">0,00</span></div><div class="k13"><span class="r">0,00</span></div></div>
<svg style="left:436px;top:367px" width="10" height="10"><use href="#iChk"/></svg>
<svg style="left:489px;top:365px" width="12" height="15"><use href="#iDoc"/></svg>
<div class="rw rwh" style="top:381px"><i class="ind"></i><i class="hl"></i><i class="gl"></i><div class="k1"><span class="r">16</span></div><div class="k5"><span class="l">1.2.7</span></div><div class="k6"><span class="l">Приведение земельных участков, предоставленных во времен</span></div><div class="k8"><span class="r">0,00</span></div><div class="k9"><span class="r">0,00</span></div><div class="k10"><span class="r">0,00</span></div><div class="k11"><span class="r">0,00</span></div><div class="k12"><span class="r">0,00</span></div><div class="k13"><span class="r">0,00</span></div></div>
<svg style="left:436px;top:383px" width="10" height="10"><use href="#iChk"/></svg>
<svg style="left:489px;top:381px" width="12" height="15"><use href="#iDoc"/></svg>
<div class="rw rwh" style="top:397px"><i class="ind"></i><i class="hl"></i><i class="gl"></i><div class="k1"><span class="r">17</span></div><div class="k5"><span class="l">1.2.8</span></div><div class="k6"><span class="l">Затраты на подготовку и экспертизу проекта освоения лесов</span></div><div class="k8"><span class="r">0,00</span></div><div class="k9"><span class="r">0,00</span></div><div class="k10"><span class="r">0,00</span></div><div class="k11"><span class="r">0,00</span></div><div class="k12"><span class="r">0,00</span></div><div class="k13"><span class="r">0,00</span></div></div>
<svg style="left:436px;top:399px" width="10" height="10"><use href="#iChk"/></svg>
<svg style="left:489px;top:397px" width="12" height="15"><use href="#iDoc"/></svg>
<div class="rw rb" style="top:413px"><i class="ind"></i><i class="hl"></i><i class="gl"></i><div class="k1"><span class="r">18</span></div><div class="k5"><span class="l">Гл. 2</span></div><div class="k6"><span class="l">Глава  2. Основные объекты строительства, реконструкции,</span></div><div class="k7"><span class="r">2</span></div><div class="k8"><span class="r">997,76</span></div><div class="k9"><span class="r">0,00</span></div><div class="k10"><span class="r">0,00</span></div><div class="k11"><span class="r">0,00</span></div><div class="k12"><span class="r">997,76</span></div><div class="k13"><span class="r">0,00</span></div></div>
<svg style="left:488px;top:413px" width="16" height="14"><use href="#iFld"/></svg>
<div class="rw ry rm" style="top:429px"><i class="ind"></i><i class="hl"></i><i class="gl"></i><div class="k1"><span class="r">19</span></div><div class="k4"><span class="l">ЛС-02-01</span></div><div class="k6"><span class="l">Устройство котлована</span></div><div class="k8"><span class="r">84,33</span></div><div class="k9"><span class="r">0,00</span></div><div class="k10"><span class="r">0,00</span></div><div class="k11"><span class="r">0,00</span></div><div class="k12"><span class="r">84,33</span></div><div class="k13"><span class="r">0,00</span></div><div class="k15"><span class="l">НПР</span></div></div>
<svg style="left:436px;top:431px" width="10" height="10"><use href="#iChk"/></svg>
<svg style="left:488px;top:429px" width="17" height="15"><use href="#iBkG"/></svg>
<div class="rw ry rm" style="top:445px"><i class="ind"></i><i class="hl"></i><i class="gl"></i><div class="k1"><span class="r">20</span></div><div class="k4"><span class="l">ЛС-02-02</span></div><div class="k6"><span class="l">Фундамент</span></div><div class="k8"><span class="r">913,43</span></div><div class="k9"><span class="r">0,00</span></div><div class="k10"><span class="r">0,00</span></div><div class="k11"><span class="r">0,00</span></div><div class="k12"><span class="r">913,43</span></div><div class="k13"><span class="r">0,00</span></div><div class="k15"><span class="l">НПР</span></div></div>
<svg style="left:436px;top:447px" width="10" height="10"><use href="#iChk"/></svg>
<svg style="left:488px;top:445px" width="17" height="15"><use href="#iBkG"/></svg>
<div class="rw rwh rm" style="top:461px"><i class="ind"></i><i class="hl"></i><i class="gl"></i><div class="k1"><span class="r">21</span></div><div class="k6"><span class="l">Итог по Сметам ЛС-02-01 ЛС02-02</span></div><div class="k8"><span class="r">997,76</span></div><div class="k9"><span class="r">0,00</span></div><div class="k10"><span class="r">0,00</span></div><div class="k11"><span class="r">0,00</span></div><div class="k12"><span class="r">997,76</span></div><div class="k13"><span class="r">0,00</span></div><span class="sq">√</span></div>
<svg style="left:436px;top:463px" width="10" height="10"><use href="#iChk"/></svg>
<svg style="left:488px;top:461px" width="16" height="15"><use href="#iHs"/></svg>
<div class="rw rb" style="top:477px"><i class="ind"></i><i class="hl"></i><i class="gl"></i><div class="k1"><span class="r">22</span></div><div class="k5"><span class="l">Гл. 3</span></div><div class="k6"><span class="l">Глава  3. Объекты подсобного и обслуживающего назначения</span></div><div class="k7"><span class="r">3</span></div><div class="k8"><span class="r">21,75</span></div><div class="k9"><span class="r">0,00</span></div><div class="k10"><span class="r">0,00</span></div><div class="k11"><span class="r">0,00</span></div><div class="k12"><span class="r">21,75</span></div><div class="k13"><span class="r">0,00</span></div></div>
<svg style="left:488px;top:477px" width="16" height="14"><use href="#iFld"/></svg>
<div class="rw ry" style="top:493px"><i class="ind"></i><i class="hl"></i><i class="gl"></i><div class="k1"><span class="r">23</span></div><div class="k4"><span class="l">ЛС-03-01</span></div><div class="k6"><span class="l">Объекты подсобного назначения</span></div><div class="k8"><span class="r">21,75</span></div><div class="k9"><span class="r">0,00</span></div><div class="k10"><span class="r">0,00</span></div><div class="k11"><span class="r">0,00</span></div><div class="k12"><span class="r">21,75</span></div><div class="k13"><span class="r">0,00</span></div><div class="k15"><span class="l">НПР</span></div></div>
<svg style="left:436px;top:495px" width="10" height="10"><use href="#iChk"/></svg>
<svg style="left:488px;top:493px" width="17" height="15"><use href="#iBkG"/></svg>
<div class="rw rb" style="top:509px"><i class="ind"></i><i class="hl"></i><i class="gl"></i><div class="k1"><span class="r">24</span></div><div class="k5"><span class="l">Гл. 4</span></div><div class="k6"><span class="l">Глава  4. Объекты энергетического хозяйства.</span></div><div class="k7"><span class="r">4</span></div><div class="k8"><span class="r">0,00</span></div><div class="k9"><span class="r">0,00</span></div><div class="k10"><span class="r">0,00</span></div><div class="k11"><span class="r">0,00</span></div><div class="k12"><span class="r">0,00</span></div><div class="k13"><span class="r">0,00</span></div></div>
<svg style="left:488px;top:509px" width="16" height="14"><use href="#iFld"/></svg>
<div class="rw rb" style="top:525px"><i class="ind"></i><i class="hl"></i><i class="gl"></i><div class="k1"><span class="r">25</span></div><div class="k5"><span class="l">Гл. 5</span></div><div class="k6"><span class="l">Глава  5. Объекты транспортного хозяйства и связи.</span></div><div class="k7"><span class="r">5</span></div><div class="k8"><span class="r">0,00</span></div><div class="k9"><span class="r">0,00</span></div><div class="k10"><span class="r">0,00</span></div><div class="k11"><span class="r">0,00</span></div><div class="k12"><span class="r">0,00</span></div><div class="k13"><span class="r">0,00</span></div></div>
<svg style="left:488px;top:525px" width="16" height="14"><use href="#iFld"/></svg>
<div class="rw rb" style="top:541px"><i class="ind"></i><i class="hl"></i><i class="gl"></i><div class="k1"><span class="r">26</span></div><div class="k5"><span class="l">Гл. 6</span></div><div class="k6"><span class="l">Глава  6. Наружные сети и сооружения водоснабжения, водоо</span></div><div class="k7"><span class="r">6</span></div><div class="k8"><span class="r">22,36</span></div><div class="k9"><span class="r">0,00</span></div><div class="k10"><span class="r">0,00</span></div><div class="k11"><span class="r">0,00</span></div><div class="k12"><span class="r">22,36</span></div><div class="k13"><span class="r">0,00</span></div></div>
<svg style="left:488px;top:541px" width="16" height="14"><use href="#iFld"/></svg>
<div class="rw rwh" style="top:557px"><i class="ind"></i><i class="hl"></i><i class="gl"></i><div class="k1"><span class="r">27</span></div><div class="k4"><span class="l">ГСН 81-05-01</span></div><div class="k5"><span class="l">Итог 1</span></div><div class="k6"><span class="l">Затраты на временные здания и сооружения; 1,5% от СМР</span></div><div class="k8"><span class="r">22,36</span></div><div class="k9"><span class="r">0,00</span></div><div class="k10"><span class="r">0,00</span></div><div class="k11"><span class="r">0,00</span></div><div class="k12"><span class="r">22,36</span></div><div class="k13"><span class="r">0,00</span></div><span class="sq">√</span></div>
<svg style="left:436px;top:559px" width="10" height="10"><use href="#iChk"/></svg>
<svg style="left:489px;top:557px" width="12" height="15"><use href="#iDoc"/></svg>
<div class="rw rb" style="top:573px"><i class="ind"></i><i class="hl"></i><i class="gl"></i><div class="k1"><span class="r">28</span></div><div class="k5"><span class="l">Гл. 7</span></div><div class="k6"><span class="l">Глава  7. Благоустройство и озеленение территории.</span></div><div class="k7"><span class="r">7</span></div><div class="k8"><span class="r">0,00</span></div><div class="k9"><span class="r">0,00</span></div><div class="k10"><span class="r">0,00</span></div><div class="k11"><span class="r">0,00</span></div><div class="k12"><span class="r">0,00</span></div><div class="k13"><span class="r">0,00</span></div></div>
<svg style="left:488px;top:573px" width="16" height="14"><use href="#iFld"/></svg>
<div class="rw rb" style="top:589px"><i class="ind"></i><i class="hl"></i><i class="gl"></i><div class="k1"><span class="r">29</span></div><div class="k5"><span class="l">Ит 1-7</span></div><div class="k6"><span class="l">Итого по главам 1 - 7</span></div><div class="k8"><span class="r">1 513,20</span></div><div class="k9"><span class="r">0,00</span></div><div class="k10"><span class="r">0,00</span></div><div class="k11"><span class="r">0,00</span></div><div class="k12"><span class="r">1 513,20</span></div><div class="k13"><span class="r">0,00</span></div></div>
<svg style="left:488px;top:589px" width="16" height="14"><use href="#iFSum"/></svg>
<div class="rw rwh" style="top:605px"><i class="ind"></i><i class="hl"></i><i class="gl"></i><div class="k1"><span class="r">30</span></div><div class="k5"><span class="l">1-7</span></div><div class="k6"><span class="l">Итого по главам 1 - 7</span></div><div class="k8"><span class="r">1 513,20</span></div><div class="k9"><span class="r">0,00</span></div><div class="k10"><span class="r">0,00</span></div><div class="k11"><span class="r">0,00</span></div><div class="k12"><span class="r">1 513,20</span></div><div class="k13"><span class="r">0,00</span></div></div>
<svg style="left:436px;top:607px" width="10" height="10"><use href="#iChk"/></svg>
<svg style="left:489px;top:605px" width="12" height="15"><use href="#iDoc"/></svg>
<div class="rw rb" style="top:621px"><i class="ind"></i><i class="hl"></i><i class="gl"></i><div class="k1"><span class="r">31</span></div><div class="k5"><span class="l">Гл. 8</span></div><div class="k6"><span class="l">Глава  8. Временные здания и сооружения.</span></div><div class="k7"><span class="r">8</span></div><div class="k8"><span class="r">0,00</span></div><div class="k9"><span class="r">0,00</span></div><div class="k10"><span class="r">0,00</span></div><div class="k11"><span class="r">0,00</span></div><div class="k12"><span class="r">0,00</span></div><div class="k13"><span class="r">0,00</span></div></div>
<svg style="left:488px;top:621px" width="16" height="14"><use href="#iFld"/></svg>
<div class="rw rwh" style="top:637px"><i class="ind"></i><i class="hl"></i><i class="gl"></i><div class="k1"><span class="r">32</span></div><div class="k5"><span class="l">Итог 2</span></div><div class="k6"><span class="l">Временные здания и сооружения.</span></div><div class="k8"><span class="r">0,00</span></div><div class="k9"><span class="r">0,00</span></div><div class="k10"><span class="r">0,00</span></div><div class="k11"><span class="r">0,00</span></div><div class="k12"><span class="r">0,00</span></div><div class="k13"><span class="r">0,00</span></div></div>
<svg style="left:436px;top:639px" width="10" height="10"><use href="#iChk"/></svg>
<svg style="left:489px;top:637px" width="12" height="15"><use href="#iDoc"/></svg>
<div class="rw rb" style="top:653px"><i class="ind"></i><i class="hl"></i><i class="gl"></i><div class="k1"><span class="r">33</span></div><div class="k5"><span class="l">Ит 1-8</span></div><div class="k6"><span class="l">Итого по главам 1 - 8</span></div><div class="k8"><span class="r">1 513,20</span></div><div class="k9"><span class="r">0,00</span></div><div class="k10"><span class="r">0,00</span></div><div class="k11"><span class="r">0,00</span></div><div class="k12"><span class="r">1 513,20</span></div><div class="k13"><span class="r">0,00</span></div></div>
<svg style="left:488px;top:653px" width="16" height="14"><use href="#iFSum"/></svg>
<div class="rw rwh" style="top:669px"><i class="ind"></i><i class="hl"></i><i class="gl"></i><div class="k1"><span class="r">34</span></div><div class="k5"><span class="l">1-8</span></div><div class="k6"><span class="l">Итого по главам 1 - 8</span></div><div class="k8"><span class="r">1 513,20</span></div><div class="k9"><span class="r">0,00</span></div><div class="k10"><span class="r">0,00</span></div><div class="k11"><span class="r">0,00</span></div><div class="k12"><span class="r">1 513,20</span></div><div class="k13"><span class="r">0,00</span></div></div>
<svg style="left:436px;top:671px" width="10" height="10"><use href="#iChk"/></svg>
<svg style="left:489px;top:669px" width="12" height="15"><use href="#iDoc"/></svg>
<div class="rw rb" style="top:685px"><i class="ind"></i><i class="hl"></i><i class="gl"></i><div class="k1"><span class="r">35</span></div><div class="k5"><span class="l">Гл. 9</span></div><div class="k6"><span class="l">Глава  9. Прочие работы и затраты.</span></div><div class="k7"><span class="r">9</span></div><div class="k8"><span class="r">55,99</span></div><div class="k9"><span class="r">0,00</span></div><div class="k10"><span class="r">0,00</span></div><div class="k11"><span class="r">0,00</span></div><div class="k12"><span class="r">55,99</span></div><div class="k13"><span class="r">0,00</span></div></div>
<svg style="left:488px;top:685px" width="16" height="14"><use href="#iFld"/></svg>
<div class="rw rwh" style="top:701px"><i class="ind"></i><i class="hl"></i><i class="gl"></i><div class="k1"><span class="r">36</span></div><div class="k4"><span class="l">325/пр Прил</span></div><div class="k5"><span class="l">Итог 3</span></div><div class="k6"><span class="l">Дополнительные затраты в зимнее время; 3,7%</span></div><div class="k8"><span class="r">55,99</span></div><div class="k9"><span class="r">0,00</span></div><div class="k10"><span class="r">0,00</span></div><div class="k11"><span class="r">0,00</span></div><div class="k12"><span class="r">55,99</span></div><div class="k13"><span class="r">0,00</span></div><span class="sq">√</span></div>
<svg style="left:436px;top:703px" width="10" height="10"><use href="#iChk"/></svg>
<svg style="left:489px;top:701px" width="12" height="15"><use href="#iDoc"/></svg>
<div class="rw rwh" style="top:717px"><i class="ind"></i><i class="hl"></i><i class="gl"></i><div class="k1"><span class="r">37</span></div><div class="k5"><span class="l">2.2</span></div><div class="k6"><span class="l">Затраты по перевозке работников к месту работы и обратно</span></div><div class="k8"><span class="r">0,00</span></div><div class="k9"><span class="r">0,00</span></div><div class="k10"><span class="r">0,00</span></div><div class="k11"><span class="r">0,00</span></div><div class="k12"><span class="r">0,00</span></div><div class="k13"><span class="r">0,00</span></div></div>
<svg style="left:436px;top:719px" width="10" height="10"><use href="#iChk"/></svg>
<svg style="left:489px;top:717px" width="12" height="15"><use href="#iDoc"/></svg>
<div class="rw rwh" style="top:733px"><i class="ind"></i><i class="hl"></i><i class="gl"></i><div class="k1"><span class="r">38</span></div><div class="k5"><span class="l">2.3</span></div><div class="k6"><span class="l">Затраты, связанные с осуществлением работ вахтовым метод</span></div><div class="k8"><span class="r">0,00</span></div><div class="k9"><span class="r">0,00</span></div><div class="k10"><span class="r">0,00</span></div><div class="k11"><span class="r">0,00</span></div><div class="k12"><span class="r">0,00</span></div><div class="k13"><span class="r">0,00</span></div></div>
<svg style="left:436px;top:735px" width="10" height="10"><use href="#iChk"/></svg>
<svg style="left:489px;top:733px" width="12" height="15"><use href="#iDoc"/></svg>
<div class="rw rwh" style="top:749px"><i class="ind"></i><i class="hl"></i><i class="gl"></i><div class="k1"><span class="r">39</span></div><div class="k5"><span class="l">2.4</span></div><div class="k6"><span class="l">Расходы, связанные со служебными командировками рабочих</span></div><div class="k8"><span class="r">0,00</span></div><div class="k9"><span class="r">0,00</span></div><div class="k10"><span class="r">0,00</span></div><div class="k11"><span class="r">0,00</span></div><div class="k12"><span class="r">0,00</span></div><div class="k13"><span class="r">0,00</span></div></div>
<svg style="left:436px;top:751px" width="10" height="10"><use href="#iChk"/></svg>
<svg style="left:489px;top:749px" width="12" height="15"><use href="#iDoc"/></svg>
<div class="rw rwh" style="top:765px"><i class="ind"></i><i class="hl"></i><i class="gl"></i><div class="k1"><span class="r">40</span></div><div class="k5"><span class="l">2.5</span></div><div class="k6"><span class="l">Затраты по содержанию спасательных служб при осуществле</span></div><div class="k8"><span class="r">0,00</span></div><div class="k9"><span class="r">0,00</span></div><div class="k10"><span class="r">0,00</span></div><div class="k11"><span class="r">0,00</span></div><div class="k12"><span class="r">0,00</span></div><div class="k13"><span class="r">0,00</span></div></div>
<svg style="left:436px;top:767px" width="10" height="10"><use href="#iChk"/></svg>
<svg style="left:489px;top:765px" width="12" height="15"><use href="#iDoc"/></svg>
<div class="rw rwh" style="top:781px"><i class="ind"></i><i class="hl"></i><i class="gl"></i><div class="k1"><span class="r">41</span></div><div class="k5"><span class="l">2.6</span></div><div class="k6"><span class="l">Затраты, связанные с проведением на территории строительс</span></div><div class="k8"><span class="r">0,00</span></div><div class="k9"><span class="r">0,00</span></div><div class="k10"><span class="r">0,00</span></div><div class="k11"><span class="r">0,00</span></div><div class="k12"><span class="r">0,00</span></div><div class="k13"><span class="r">0,00</span></div></div>
<svg style="left:436px;top:783px" width="10" height="10"><use href="#iChk"/></svg>
<svg style="left:489px;top:781px" width="12" height="15"><use href="#iDoc"/></svg>
<div class="rw rwh" style="top:797px"><i class="ind"></i><i class="hl"></i><i class="gl"></i><div class="k1"><span class="r">42</span></div><div class="k5"><span class="l">2.7</span></div><div class="k6"><span class="l">Затраты на проведение пусконаладочных работ</span></div><div class="k8"><span class="r">0,00</span></div><div class="k9"><span class="r">0,00</span></div><div class="k10"><span class="r">0,00</span></div><div class="k11"><span class="r">0,00</span></div><div class="k12"><span class="r">0,00</span></div><div class="k13"><span class="r">0,00</span></div></div>
<svg style="left:436px;top:799px" width="10" height="10"><use href="#iChk"/></svg>
<svg style="left:489px;top:797px" width="12" height="15"><use href="#iDoc"/></svg>
<div class="rw rwh" style="top:813px"><i class="ind"></i><i class="hl"></i><i class="gl"></i><div class="k1"><span class="r">43</span></div><div class="k5"><span class="l">2.8</span></div><div class="k6"><span class="l">Затраты на содержание автомобильных дорог и восстановлен</span></div><div class="k8"><span class="r">0,00</span></div><div class="k9"><span class="r">0,00</span></div><div class="k10"><span class="r">0,00</span></div><div class="k11"><span class="r">0,00</span></div><div class="k12"><span class="r">0,00</span></div><div class="k13"><span class="r">0,00</span></div></div>
<svg style="left:436px;top:815px" width="10" height="10"><use href="#iChk"/></svg>
<svg style="left:489px;top:813px" width="12" height="15"><use href="#iDoc"/></svg>
<div class="rw rwh" style="top:829px"><i class="ind"></i><i class="hl"></i><i class="gl"></i><div class="k1"><span class="r">44</span></div><div class="k5"><span class="l">2.9</span></div><div class="k6"><span class="l">Затраты по подключению (технологическому присоединению)</span></div><div class="k8"><span class="r">0,00</span></div><div class="k9"><span class="r">0,00</span></div><div class="k10"><span class="r">0,00</span></div><div class="k11"><span class="r">0,00</span></div><div class="k12"><span class="r">0,00</span></div><div class="k13"><span class="r">0,00</span></div></div>
<svg style="left:436px;top:831px" width="10" height="10"><use href="#iChk"/></svg>
<svg style="left:489px;top:829px" width="12" height="15"><use href="#iDoc"/></svg>
<div class="rw rwh" style="top:845px"><i class="ind"></i><i class="hl"></i><i class="gl"></i><div class="k1"><span class="r">45</span></div><div class="k5"><span class="l">2.10</span></div><div class="k6"><span class="l">Затраты по размещению, утилизации и (или) обезвреживанию</span></div><div class="k8"><span class="r">0,00</span></div><div class="k9"><span class="r">0,00</span></div><div class="k10"><span class="r">0,00</span></div><div class="k11"><span class="r">0,00</span></div><div class="k12"><span class="r">0,00</span></div><div class="k13"><span class="r">0,00</span></div></div>
<svg style="left:436px;top:847px" width="10" height="10"><use href="#iChk"/></svg>
<svg style="left:489px;top:845px" width="12" height="15"><use href="#iDoc"/></svg>
<div class="rw rwh" style="top:861px"><i class="ind"></i><i class="hl"></i><i class="gl"></i><div class="k1"><span class="r">46</span></div><div class="k5"><span class="l">2.11</span></div><div class="k6"><span class="l">Плата за негативное воздействие на окружающую среду (затр</span></div><div class="k8"><span class="r">0,00</span></div><div class="k9"><span class="r">0,00</span></div><div class="k10"><span class="r">0,00</span></div><div class="k11"><span class="r">0,00</span></div><div class="k12"><span class="r">0,00</span></div><div class="k13"><span class="r">0,00</span></div></div>
<svg style="left:436px;top:863px" width="10" height="10"><use href="#iChk"/></svg>
<svg style="left:489px;top:861px" width="12" height="15"><use href="#iDoc"/></svg>
<div class="rw rwh" style="top:877px"><i class="ind"></i><i class="hl"></i><i class="gl"></i><div class="k1"><span class="r">47</span></div><div class="k5"><span class="l">2.12</span></div><div class="k6"><span class="l">Компенсация расходов предприятиям железнодорожного, реч</span></div><div class="k8"><span class="r">0,00</span></div><div class="k9"><span class="r">0,00</span></div><div class="k10"><span class="r">0,00</span></div><div class="k11"><span class="r">0,00</span></div><div class="k12"><span class="r">0,00</span></div><div class="k13"><span class="r">0,00</span></div></div>
<svg style="left:436px;top:879px" width="10" height="10"><use href="#iChk"/></svg>
<svg style="left:489px;top:877px" width="12" height="15"><use href="#iDoc"/></svg>
<div class="rw rwh" style="top:893px"><i class="ind"></i><i class="hl"></i><i class="gl"></i><div class="k1"><span class="r">48</span></div><div class="k5"><span class="l">2.13</span></div><div class="k6"><span class="l">Затраты, связанные с перевозкой опасных, тяжеловесных и</span></div><div class="k8"><span class="r">0,00</span></div><div class="k9"><span class="r">0,00</span></div><div class="k10"><span class="r">0,00</span></div><div class="k11"><span class="r">0,00</span></div><div class="k12"><span class="r">0,00</span></div><div class="k13"><span class="r">0,00</span></div></div>
<svg style="left:436px;top:895px" width="10" height="10"><use href="#iChk"/></svg>
<svg style="left:489px;top:893px" width="12" height="15"><use href="#iDoc"/></svg>
<div class="rw rwh" style="top:909px"><i class="ind"></i><i class="hl"></i><i class="gl"></i><div class="k1"><span class="r">49</span></div><div class="k5"><span class="l">2.14</span></div><div class="k6"><span class="l">Затраты, связанные с арендой и содержанием вспомогательн</span></div><div class="k8"><span class="r">0,00</span></div><div class="k9"><span class="r">0,00</span></div><div class="k10"><span class="r">0,00</span></div><div class="k11"><span class="r">0,00</span></div><div class="k12"><span class="r">0,00</span></div><div class="k13"><span class="r">0,00</span></div></div>
<svg style="left:436px;top:911px" width="10" height="10"><use href="#iChk"/></svg>
<svg style="left:489px;top:909px" width="12" height="15"><use href="#iDoc"/></svg>
<div class="rw rwh" style="top:925px"><i class="ind"></i><i class="hl"></i><i class="gl"></i><div class="k1"><span class="r">50</span></div><div class="k5"><span class="l">2.15</span></div><div class="k6"><span class="l">Затраты, связанные с перебазированием подрядных организа</span></div><div class="k8"><span class="r">0,00</span></div><div class="k9"><span class="r">0,00</span></div><div class="k10"><span class="r">0,00</span></div><div class="k11"><span class="r">0,00</span></div><div class="k12"><span class="r">0,00</span></div><div class="k13"><span class="r">0,00</span></div></div>
<svg style="left:436px;top:927px" width="10" height="10"><use href="#iChk"/></svg>
<svg style="left:489px;top:925px" width="12" height="15"><use href="#iDoc"/></svg>
<div class="rw rwh" style="top:941px"><i class="ind"></i><i class="hl"></i><i class="gl"></i><div class="k1"><span class="r">51</span></div><div class="k5"><span class="l">2.16</span></div><div class="k6"><span class="l">Затраты, связанные с использованием студенческих отрядов</span></div><div class="k8"><span class="r">0,00</span></div><div class="k9"><span class="r">0,00</span></div><div class="k10"><span class="r">0,00</span></div><div class="k11"><span class="r">0,00</span></div><div class="k12"><span class="r">0,00</span></div><div class="k13"><span class="r">0,00</span></div></div>
<svg style="left:436px;top:943px" width="10" height="10"><use href="#iChk"/></svg>
<svg style="left:489px;top:941px" width="12" height="15"><use href="#iDoc"/></svg>
<div class="rw rwh" style="top:957px"><i class="ind"></i><i class="hl"></i><i class="gl"></i><div class="k1"><span class="r">52</span></div><div class="k5"><span class="l">2.17</span></div><div class="k6"><span class="l">Затраты, связанные с предоставлением независимой гарантии</span></div><div class="k8"><span class="r">0,00</span></div><div class="k9"><span class="r">0,00</span></div><div class="k10"><span class="r">0,00</span></div><div class="k11"><span class="r">0,00</span></div><div class="k12"><span class="r">0,00</span></div><div class="k13"><span class="r">0,00</span></div><div class="k15"><span class="l">НПР</span></div></div>
<svg style="left:436px;top:959px" width="10" height="10"><use href="#iChk"/></svg>
<svg style="left:489px;top:957px" width="12" height="15"><use href="#iDoc"/></svg>
<i style="left:364px;top:141px;width:1px;height:832px;background:#8c8c8c"></i>
<i style="left:376px;top:141px;width:1px;height:832px;background:#8c8c8c"></i>
<i style="left:411px;top:141px;width:1px;height:832px;background:#c0c0c0"></i>
<i style="left:470px;top:141px;width:1px;height:832px;background:#c0c0c0"></i>
<i style="left:522px;top:141px;width:1px;height:832px;background:#c0c0c0"></i>
<i style="left:587px;top:141px;width:1px;height:832px;background:#c0c0c0"></i>
<i style="left:663px;top:141px;width:1px;height:832px;background:#c0c0c0"></i>
<i style="left:980px;top:141px;width:1px;height:832px;background:#c0c0c0"></i>
<i style="left:1021px;top:141px;width:1px;height:832px;background:#c0c0c0"></i>
<i style="left:1102px;top:141px;width:1px;height:832px;background:#c0c0c0"></i>
<i style="left:1183px;top:141px;width:1px;height:832px;background:#c0c0c0"></i>
<i style="left:1264px;top:141px;width:1px;height:832px;background:#c0c0c0"></i>
<i style="left:1339px;top:141px;width:1px;height:832px;background:#c0c0c0"></i>
<i style="left:1440px;top:141px;width:1px;height:832px;background:#c0c0c0"></i>
<i style="left:1515px;top:141px;width:1px;height:832px;background:#c0c0c0"></i>
<i style="left:1566px;top:141px;width:1px;height:832px;background:#c0c0c0"></i>
<i style="left:1631px;top:141px;width:1px;height:832px;background:#c0c0c0"></i>
<svg style="left:368px;top:143px" width="7" height="11" viewBox="0 0 7 11"><path d="M0 0L6 5.5L0 11Z" fill="#000"/></svg>
<svg style="left:372px;top:457px" width="1260" height="23"><rect x="2.35" y="2.05" width="1254.6" height="17.9" fill="none" stroke="#ff0000" stroke-width="3.3"/></svg>
<div style="left:1735px;top:125px;width:16px;height:862px;background:#f0f0f0"></div>
<div style="left:1735px;top:142px;width:16px;height:276px;background:#cdcdcd"></div>
<svg style="left:1739px;top:130px" width="9" height="6" viewBox="0 0 9 6"><path d="M1 5L4.5 1.5L8 5" stroke="#606060" stroke-width="1.6" fill="none"/></svg>
<svg style="left:1739px;top:975px" width="9" height="6" viewBox="0 0 9 6"><path d="M1 1L4.5 4.5L8 1" stroke="#606060" stroke-width="1.6" fill="none"/></svg>
<div style="left:364px;top:993px;width:74px;height:19px;background:#f4f4f4;border:1px solid;border-color:#fff #e3e3e3 #e3e3e3 #fff"></div>
<span class="t" style="left:368.5px;top:996.5px;font-size:12px;line-height:15px;color:#000;transform:scaleX(0.917);">2000, Январь</span>
<span class="t" style="left:448.5px;top:996.5px;font-size:12px;line-height:15px;color:#000;transform:scaleX(0.917);">2025, Март</span>
<i style="left:405px;top:1023px;width:1349px;height:1px;background:#696969"></i>
<i style="left:405px;top:1024px;width:1349px;height:1px;background:#a0a0a0"></i>
<div style="left:405px;top:1024px;width:85px;height:18px;background:#f0f0f0;border:1px solid;border-color:transparent #696969 #696969 #fff;border-top:0;border-radius:0 0 2px 2px;box-shadow:inset -1px -1px 0 #a0a0a0"></div><span class="t" style="left:410.5px;top:1025.5px;font-size:12px;line-height:15px;color:#000;transform:scaleX(0.917);">Сводка затрат</span>
<div style="left:491px;top:1024px;width:86px;height:18px;background:#f0f0f0;border:1px solid;border-color:transparent #696969 #696969 #fff;border-top:0;border-radius:0 0 2px 2px;box-shadow:inset -1px -1px 0 #a0a0a0"></div><span class="t" style="left:496.5px;top:1025.5px;font-size:12px;line-height:15px;color:#000;transform:scaleX(0.917);">Предпросмотр</span>
<div style="left:360px;top:1021px;width:45px;height:23px;background:#f0f0f0;border:1px solid;border-color:transparent #696969 #696969 #fff;border-top:0;box-shadow:inset -1px -1px 0 #a0a0a0"></div>
<span class="t" style="left:368px;top:1027.5px;font-size:12px;line-height:15px;color:#000;transform:scaleX(0.9);">ССР</span>
<i style="left:1px;top:1044px;width:1754px;height:1px;background:#fff"></i>
<i style="left:1px;top:1045px;width:1754px;height:1px;background:#a0a0a0"></i>
<div style="left:2px;top:1046px;width:1752px;height:39px;border:1px solid;border-color:#a0a0a0 #fff #fff #a0a0a0"></div>
<div style="left:1633px;top:1054px;width:113px;height:22px;background:#f0f0f0;border:1px solid;border-color:#fff #696969 #696969 #fff;box-shadow:inset -1px -1px 0 #a0a0a0"></div>
<span class="t" style="left:1667.5px;top:1058px;font-size:12px;line-height:15px;color:#000;transform:scaleX(0.917);">Закрыть</span>
<i style="left:1px;top:1085px;width:1754px;height:1px;background:#a0a0a0"></i>
<i style="left:1px;top:1086px;width:1754px;height:1px;background:#fff"></i>
<div style="left:4px;top:1089px;width:86px;height:25px;border:1px solid;border-color:#a0a0a0 #fff #fff #a0a0a0"></div>
<div style="left:93px;top:1089px;width:296px;height:25px;border:1px solid;border-color:#a0a0a0 #fff #fff #a0a0a0"></div>
<div style="left:393px;top:1089px;width:1292px;height:25px;border:1px solid;border-color:#a0a0a0 #fff #fff #a0a0a0"></div>
<div style="left:1689px;top:1089px;width:30px;height:25px;border:1px solid;border-color:#a0a0a0 #fff #fff #a0a0a0"></div>
<div style="left:1723px;top:1089px;width:30px;height:25px;border:1px solid;border-color:#a0a0a0 #fff #fff #a0a0a0"></div>
<i style="left:90px;top:1088px;width:1px;height:27px;background:#fff"></i>
<i style="left:389px;top:1088px;width:1px;height:27px;background:#fff"></i>
<i style="left:1685px;top:1088px;width:1px;height:27px;background:#fff"></i>
<i style="left:1720px;top:1088px;width:1px;height:27px;background:#fff"></i>
<span class="t" style="left:1730.5px;top:1094px;font-size:12.5px;line-height:15px;color:#000;transform:scaleX(0.93);">RU</span>
<div style="left:1696px;top:1094px;width:16px;height:16px;background:#9a9a9a;border-radius:5px"><i style="left:7px;top:3px;width:2px;height:2px;background:#e0e0e0"></i><i style="left:7px;top:6px;width:2px;height:7px;background:#e0e0e0"></i></div>
<svg style="left:1694px;top:1092px" width="20" height="20" viewBox="0 0 20 20"><path d="M2.5 2.5L17.5 18" stroke="#ff0010" stroke-width="1.7"/></svg>
<svg style="left:17px;top:32px" width="14" height="16" viewBox="0 0 14 16"><rect x="0.5" y="0.5" width="7" height="2.2" fill="#ffff00" stroke="#8c8c3a" stroke-width="1"/><path d="M4.5 3V13.5H6M4.5 5.5H6M4.5 9.5H6" stroke="#1f2a60" stroke-width="1" fill="none"/><rect x="6" y="4.2" width="6.6" height="2.4" fill="#a8c8f4" stroke="#5a78a8" stroke-width="0.9"/><rect x="6" y="8.2" width="6.6" height="2.4" fill="#a8c8f4" stroke="#5a78a8" stroke-width="0.9"/><rect x="6" y="12.2" width="6.6" height="2.4" fill="#a8c8f4" stroke="#5a78a8" stroke-width="0.9"/></svg>
<svg style="left:38px;top:32px" width="18" height="16" viewBox="0 0 18 16"><rect x="5.0" y="0.5" width="7" height="2.2" fill="#ffff00" stroke="#8c8c3a" stroke-width="1"/><path d="M9.0 3V13.5H10.5M9.0 5.5H10.5M9.0 9.5H10.5" stroke="#1f2a60" stroke-width="1" fill="none"/><rect x="10.5" y="4.2" width="6.6" height="2.4" fill="#a8c8f4" stroke="#5a78a8" stroke-width="0.9"/><rect x="10.5" y="8.2" width="6.6" height="2.4" fill="#a8c8f4" stroke="#5a78a8" stroke-width="0.9"/><rect x="10.5" y="12.2" width="6.6" height="2.4" fill="#a8c8f4" stroke="#5a78a8" stroke-width="0.9"/><path d="M0.5 8H4V5.8L7.2 9L4 12.2V10H0.5Z" fill="#0030e0"/></svg>
<svg style="left:69px;top:32px" width="14" height="14" viewBox="0 0 14 14"><rect x="0.7" y="0.7" width="12.8" height="12.8" fill="#f4f8f4" stroke="#3f7f3f" stroke-width="1.4"/><path d="M3 3.5H6L7.3 5.6L8.8 3.5H11.5L8.6 7.3L11.5 11H8.6L7.2 8.9L5.8 11H3L5.9 7.2Z" fill="#2e8b3a"/><path d="M3 3.5H6L7.3 5.6L5.9 7.2Z" fill="#58b060"/></svg>
<svg style="left:97px;top:31px" width="16" height="16" viewBox="0 0 16 16"><path d="M3.5 1H12L15.5 4V15H3.5Z" fill="#fff" stroke="#c8c8c8" stroke-width="0.7"/><rect x="0" y="1.8" width="14" height="5.6" fill="#e8101c"/><text x="7" y="6.6" font-family="Liberation Sans" font-weight="bold" font-size="5.6" fill="#fff" text-anchor="middle" letter-spacing="0.4">PDF</text><path d="M4.5 14.5C6 11.5 7.5 10 9.5 9.2C8 11 7.2 12.5 7 14.5ZM8 14.5C9.5 11.5 11 10 13.5 9C11.5 11 10.8 12.8 10.6 14.5ZM11.5 14.5C12 12.8 13 11.5 15 10.5V11.8C14 12.5 13.6 13.5 13.5 14.5Z" fill="#e8101c"/></svg>
<svg style="left:126px;top:31px" width="16" height="16" viewBox="0 0 16 16"><path d="M7 9.5L1.2 14.2" stroke="#c86414" stroke-width="2.8" stroke-linecap="round"/><path d="M7 9.2L1.4 13.7" stroke="#f09030" stroke-width="1.2" stroke-linecap="round"/><circle cx="10" cy="5.6" r="4.6" fill="#a9c2ee" stroke="#e8a878" stroke-width="1.5"/><circle cx="9" cy="4.6" r="2" fill="#d4e2fa"/></svg>
<svg style="left:163px;top:32px" width="14" height="14" viewBox="0 0 14 14"><path d="M0 0H11.5L14 2.5V14H0Z" fill="#808080"/><rect x="2" y="6.5" width="10" height="6.5" fill="#e2e2e2"/><rect x="3.5" y="0" width="7" height="4.6" fill="#a8a8a8"/><rect x="7.7" y="1" width="1.8" height="2.8" fill="#6a6a6a"/></svg>
<svg style="left:186px;top:32px" width="14" height="14" viewBox="0 0 14 14"><path d="M1.9 8.6A5.3 5.3 0 0 1 9.6 2.2" stroke="#828282" stroke-width="2" fill="none"/><path d="M12.1 5.4A5.3 5.3 0 0 1 4.4 11.8" stroke="#828282" stroke-width="2" fill="none"/><path d="M7.6 0.2L11.8 0.8L9.4 4.6Z" fill="#828282"/><path d="M6.4 13.8L2.2 13.2L4.6 9.4Z" fill="#828282"/></svg>
<svg style="left:210px;top:34px" width="13" height="9" viewBox="0 0 13 9"><path d="M1.6 4.5C5 1 10 1.5 12 7.5" stroke="#8c8c8c" stroke-width="1.7" fill="none"/><path d="M0.3 2.2L0.6 7L5 5.6Z" fill="#808080"/></svg>
<svg style="left:238.5px;top:32px" width="14" height="15" viewBox="0 0 14 15"><path d="M2.5 4C6 -0.5 12 0.5 12.4 8" stroke="#3434f0" stroke-width="1.7" fill="none"/><path d="M0 2L0.5 6.6L5.2 5.4Z" fill="#2222e8"/><rect x="4.9" y="7.6" width="8.4" height="6.6" fill="#fff" stroke="#5866c0" stroke-width="1"/><path d="M6.6 9.2L11.6 12.8M11.6 9.2L6.6 12.8M9.1 9V13" stroke="#000" stroke-width="0.9"/></svg>
<svg style="left:267px;top:31px" width="16" height="16" viewBox="0 0 16 16"><rect x="0.5" y="3.6" width="9.5" height="3.6" fill="#e6e6e6" stroke="#808080" stroke-width="1"/><path d="M2.5 5.4H6" stroke="#808080" stroke-width="0.9"/><rect x="2" y="8" width="10" height="8" fill="#8a8a8a"/><path d="M2.8 10.6H11.2M2.8 13.2H11.2" stroke="#d8d8d8" stroke-width="0.8"/><rect x="7.999999999999998" y="3.3306690738754696e-16" width="7.3999999999999995" height="7.3999999999999995" fill="#a0a0a0" rx="0.8"/><path d="M8.799999999999999 3.7H14.6M11.7 0.8000000000000004V6.6M9.499999999999998 1.5000000000000004L13.9 5.9M13.9 1.5000000000000004L9.499999999999998 5.9" stroke="#fff" stroke-width="0.9"/><circle cx="11.7" cy="3.7" r="1.7999999999999998" fill="#fff"/><circle cx="11.7" cy="3.7" r="0.8999999999999999" fill="#a0a0a0"/></svg>
<svg style="left:290px;top:31px" width="16" height="16" viewBox="0 0 16 16"><rect x="0.5" y="3.6" width="10.5" height="3" fill="#8a8a8a"/><rect x="1.5" y="7" width="9" height="3.4" fill="#8a8a8a"/><path d="M2 6.8H10.5" stroke="#d8d8d8" stroke-width="0.7"/><rect x="2" y="11" width="8.6" height="4.4" fill="#e6e6e6" stroke="#808080" stroke-width="1"/><path d="M3.6 13.2H6.6" stroke="#808080" stroke-width="0.9"/><rect x="7.999999999999998" y="3.3306690738754696e-16" width="7.3999999999999995" height="7.3999999999999995" fill="#a0a0a0" rx="0.8"/><path d="M8.799999999999999 3.7H14.6M11.7 0.8000000000000004V6.6M9.499999999999998 1.5000000000000004L13.9 5.9M13.9 1.5000000000000004L9.499999999999998 5.9" stroke="#fff" stroke-width="0.9"/><circle cx="11.7" cy="3.7" r="1.7999999999999998" fill="#fff"/><circle cx="11.7" cy="3.7" r="0.8999999999999999" fill="#a0a0a0"/></svg>
<svg style="left:312px;top:31px" width="17" height="16" viewBox="0 0 17 16"><path d="M1.2 4.2H12.5V10.5H7L4.6 14.2L5 10.5H1.2Z" fill="#f6f6f6" stroke="#9a9a9a" stroke-width="1.1" stroke-linejoin="round"/><rect x="8.6" y="3.3306690738754696e-16" width="7.3999999999999995" height="7.3999999999999995" fill="#a0a0a0" rx="0.8"/><path d="M9.4 3.7H15.200000000000001M12.3 0.8000000000000004V6.6M10.1 1.5000000000000004L14.500000000000002 5.9M14.500000000000002 1.5000000000000004L10.1 5.9" stroke="#fff" stroke-width="0.9"/><circle cx="12.3" cy="3.7" r="1.7999999999999998" fill="#fff"/><circle cx="12.3" cy="3.7" r="0.8999999999999999" fill="#a0a0a0"/></svg>
<svg style="left:341px;top:33.5px" width="16" height="12" viewBox="0 0 16 12"><ellipse cx="7.5" cy="7.5" rx="7" ry="4.2" fill="#9a9a9a"/><path d="M0.8 7C2.5 12 12.5 12 14.2 7Z" fill="#858585"/><rect x="4.6" y="0.4" width="5.4" height="2" fill="#8a8a8a" stroke="#b8b8b8" stroke-width="0.5"/><rect x="2.4" y="2.6" width="5" height="2" fill="#8a8a8a" stroke="#b8b8b8" stroke-width="0.5"/><rect x="7.8" y="2.6" width="5" height="2" fill="#8a8a8a" stroke="#b8b8b8" stroke-width="0.5"/><path d="M2.5 6.5C5 8.5 10 8.5 12.8 6.5" stroke="#c4c4c4" stroke-width="0.9" fill="none"/><path d="M15.2 4V11" stroke="#505050" stroke-width="1.1"/></svg>
<svg style="left:364px;top:33px" width="16" height="13" viewBox="0 0 16 13"><rect x="4.5" y="0.5" width="9" height="9.5" fill="#9c9c9c" stroke="#7c7c7c" stroke-width="1"/><path d="M7.5 3L10.5 7M10.5 3L7.5 7M6.5 2.4H11.5" stroke="#6c6c6c" stroke-width="0.7"/><rect x="0.5" y="5.5" width="6" height="6" fill="#8a8a8a" stroke="#6c6c6c" stroke-width="1"/><path d="M2.5 6.5V11M4.5 6.5V11" stroke="#b4b4b4" stroke-width="0.7"/><rect x="10.5" y="8.8" width="5" height="3.8" fill="#aaa" stroke="#787878" stroke-width="1"/></svg>
<svg style="left:530.5px;top:33px" width="11" height="11" viewBox="0 0 11 11"><path d="M0.8 0.8L10.2 10.2M10.2 0.8L0.8 10.2" stroke="#a0a0a0" stroke-width="1.5" stroke-linecap="round"/></svg>
<svg style="left:557px;top:31.5px" width="16" height="15" viewBox="0 0 16 15"><rect x="3.5" y="0.6" width="9" height="12" rx="1" fill="#c8c8c8" stroke="#8a8a8a" stroke-width="0.9"/><rect x="4.6" y="2" width="6.8" height="2.4" fill="#707070"/><g fill="#f4f4f4"><rect x="5" y="5.4" width="1.4" height="1.2"/><rect x="5" y="7.4" width="1.4" height="1.2"/><rect x="5" y="9.4" width="1.4" height="1.2"/><rect x="7.3" y="5.4" width="1.4" height="1.2"/><rect x="7.3" y="7.4" width="1.4" height="1.2"/><rect x="7.3" y="9.4" width="1.4" height="1.2"/><rect x="9.6" y="5.4" width="1.4" height="1.2"/><rect x="9.6" y="7.4" width="1.4" height="1.2"/><rect x="9.6" y="9.4" width="1.4" height="1.2"/></g><ellipse cx="2.8" cy="13.6" rx="2.6" ry="1.1" fill="#d0d0d0" stroke="#787878" stroke-width="0.8"/><ellipse cx="2.8" cy="11.8" rx="2.6" ry="1.1" fill="#d0d0d0" stroke="#787878" stroke-width="0.8"/><ellipse cx="13.2" cy="13.6" rx="2.6" ry="1.1" fill="#d0d0d0" stroke="#787878" stroke-width="0.8"/><ellipse cx="13.2" cy="11.8" rx="2.6" ry="1.1" fill="#d0d0d0" stroke="#787878" stroke-width="0.8"/><ellipse cx="13.2" cy="10" rx="2.6" ry="1.1" fill="#d0d0d0" stroke="#787878" stroke-width="0.8"/></svg>
<svg style="left:581px;top:31px" width="14" height="16" viewBox="0 0 14 16"><path d="M3.5 1.5H8V6H12.5V14.5H0.5V4.5Z" fill="#f4f4f4" stroke="#8a8a8a" stroke-width="1"/><rect x="8" y="0.5" width="5.5" height="6" fill="#fafafa" stroke="#aaa" stroke-width="0.9"/><path d="M9.5 2.5H12M9.5 4H12" stroke="#ccc" stroke-width="0.6"/><path d="M0.5 10H5.5M3 7.5V12.5" stroke="#4a4a4a" stroke-width="1.8"/><path d="M5.8 12.6H10.8" stroke="#9a9a9a" stroke-width="1.6"/></svg>
<svg style="left:607px;top:32px" width="8" height="13" viewBox="0 0 8 13"><path d="M0.3 3.4H6.9M3.6 0.2V6.6" stroke="#4a4a4a" stroke-width="2.6" stroke-linecap="round"/><rect x="0.3" y="10" width="6.6" height="2.4" rx="1" fill="#a8a8a8"/></svg>
<svg style="left:633.5px;top:31px" width="12" height="15" viewBox="0 0 12 15"><path d="M2.2 0.5L8 11M9.8 0.5L4 11" stroke="#8a8a8a" stroke-width="1.2"/><path d="M2.2 0.5L5 6L6 5.5ZM9.8 0.5L7 6L6 5.5Z" fill="#e6e6e6" stroke="#9a9a9a" stroke-width="0.6"/><ellipse cx="2.4" cy="12.6" rx="1.9" ry="2" fill="none" stroke="#6e6e6e" stroke-width="1.2"/><ellipse cx="9.6" cy="12.6" rx="1.9" ry="2" fill="none" stroke="#6e6e6e" stroke-width="1.2"/></svg>
<svg style="left:655px;top:31.5px" width="16" height="14" viewBox="0 0 16 14"><path d="M0.5 2.5H3L4 1.5H8.5V11.5H0.5Z" fill="#f4f4f4" stroke="#9a9a9a" stroke-width="1"/><path d="M2 5H6M2 7H6M2 9H6" stroke="#b4b4b4" stroke-width="0.8"/><path d="M6.5 4.5H9L10 3.5H15.5V13.5H6.5Z" fill="#f6f6f6" stroke="#9a9a9a" stroke-width="1"/><path d="M8.2 7H13.8M8.2 9H13.8M8.2 11H13.8" stroke="#a8a8a8" stroke-width="0.9"/></svg>
<svg style="left:678px;top:31px" width="16" height="16" viewBox="0 0 16 16"><rect x="0.5" y="1.6" width="15" height="11.6" rx="1.5" fill="#a8a8a8" stroke="#909090" stroke-width="1"/><rect x="5" y="0.4" width="6" height="2.4" rx="0.8" fill="#bcbcbc" stroke="#8a8a8a" stroke-width="0.7"/><path d="M3.5 6.5L5.5 4.5H12.5V15.5H3.5Z" fill="#f4f4f4" stroke="#8a8a8a" stroke-width="1"/><path d="M5.2 8.4H10.8M5.2 10.4H10.8M5.2 12.4H10.8" stroke="#909090" stroke-width="0.9"/></svg>
<svg style="left:825px;top:32px" width="16" height="14" viewBox="0 0 16 14"><path d="M0.5 2.5L2.5 0.5H8.5V10.5H0.5Z" fill="#f6f6f6" stroke="#b0b0b0" stroke-width="1"/><path d="M6.5 4.5L8.5 2.5H15.5V13.5H6.5Z" fill="#eeeeee" stroke="#b0b0b0" stroke-width="1"/></svg>
<svg style="left:848px;top:31px" width="16" height="16" viewBox="0 0 16 16"><rect x="0.5" y="1.5" width="15" height="12" rx="1.5" fill="#ffb61c" stroke="#e09a10" stroke-width="1"/><rect x="4.6" y="0.3" width="6.8" height="2.6" rx="1" fill="#ffd050" stroke="#d89c20" stroke-width="0.7"/><path d="M3.5 6L5.5 4H12.5V15.5H3.5Z" fill="#c8ecf0" stroke="#7a8a90" stroke-width="1"/></svg>
<svg style="left:907px;top:31px" width="16" height="16" viewBox="0 0 16 16"><path d="M0.5 9L8 13.5L14.5 9.5V12L8 15.5L0.5 11.5Z" fill="#dcdcdc" stroke="#b4b4b4" stroke-width="0.6"/><path d="M0.5 9L5.5 1.5L14.5 4.5L8 13.5Z" fill="#8c8c8c"/><path d="M5.5 1.5L7 0.5L9.5 3Z" fill="#a8a8a8"/><rect x="8.6" y="0.8000000000000002" width="7.3999999999999995" height="7.3999999999999995" fill="#a0a0a0" rx="0.8"/><path d="M9.4 4.5H15.200000000000001M12.3 1.6V7.3999999999999995M10.1 2.3000000000000003L14.500000000000002 6.699999999999999M14.500000000000002 2.3000000000000003L10.1 6.699999999999999" stroke="#fff" stroke-width="0.9"/><circle cx="12.3" cy="4.5" r="1.7999999999999998" fill="#fff"/><circle cx="12.3" cy="4.5" r="0.8999999999999999" fill="#a0a0a0"/></svg>
<svg style="left:930px;top:31px" width="16" height="16" viewBox="0 0 16 16"><rect x="0.9" y="1.7" width="14.6" height="12.8" fill="#fdfdfd" stroke="#a8a8a8" stroke-width="1"/><rect x="-1.1102230246251565e-16" y="0.20000000000000007" width="6.8" height="6.8" fill="#a0a0a0" rx="0.8"/><path d="M0.7999999999999999 3.6H6.0M3.4 1.0V6.199999999999999M1.5 1.7000000000000002L5.300000000000001 5.5M5.300000000000001 1.7000000000000002L1.5 5.5" stroke="#fff" stroke-width="0.9"/><circle cx="3.4" cy="3.6" r="1.5" fill="#fff"/><circle cx="3.4" cy="3.6" r="0.6000000000000001" fill="#a0a0a0"/><text x="6.8" y="13" font-family="Liberation Sans" font-size="7.6" fill="#000">Р</text></svg>
<svg style="left:953px;top:31px" width="16" height="16" viewBox="0 0 16 16"><rect x="0.9" y="1.7" width="14.6" height="12.8" fill="#fdfdfd" stroke="#a8a8a8" stroke-width="1"/><rect x="-1.1102230246251565e-16" y="0.20000000000000007" width="6.8" height="6.8" fill="#a0a0a0" rx="0.8"/><path d="M0.7999999999999999 3.6H6.0M3.4 1.0V6.199999999999999M1.5 1.7000000000000002L5.300000000000001 5.5M5.300000000000001 1.7000000000000002L1.5 5.5" stroke="#fff" stroke-width="0.9"/><circle cx="3.4" cy="3.6" r="1.5" fill="#fff"/><circle cx="3.4" cy="3.6" r="0.6000000000000001" fill="#a0a0a0"/><text x="3.2" y="13" font-family="Liberation Sans" font-size="7.6" fill="#000">ПР</text></svg>
<svg style="left:982px;top:31px" width="16" height="16" viewBox="0 0 16 16"><rect x="0.5" y="1.5" width="7" height="2" fill="#c8c8c8" stroke="#8c8c8c" stroke-width="0.9"/><path d="M4 4V14H6.5M4 7H6.5M4 10.5H6.5" stroke="#8c8c8c" stroke-width="1" fill="none"/><rect x="6.5" y="6" width="6" height="2" fill="#c8c8c8" stroke="#8c8c8c" stroke-width="0.9"/><rect x="6.5" y="9.5" width="6" height="2" fill="#c8c8c8" stroke="#8c8c8c" stroke-width="0.9"/><rect x="6.5" y="13" width="6" height="2" fill="#c8c8c8" stroke="#8c8c8c" stroke-width="0.9"/><path d="M8.5 6.2L14 0.8L15.2 2L9.8 7.4Z" fill="#c0c0c0" stroke="#8c8c8c" stroke-width="0.7"/></svg>
<svg style="left:1005px;top:31px" width="17" height="16" viewBox="0 0 17 16"><rect x="0.5" y="1.5" width="7" height="2" fill="#c8c8c8" stroke="#8c8c8c" stroke-width="0.9"/><path d="M4 4V14H6.5M4 7H6.5M4 10.5H6.5" stroke="#8c8c8c" stroke-width="1" fill="none"/><rect x="6.5" y="6" width="6" height="2" fill="#c8c8c8" stroke="#8c8c8c" stroke-width="0.9"/><rect x="6.5" y="9.5" width="6" height="2" fill="#c8c8c8" stroke="#8c8c8c" stroke-width="0.9"/><rect x="6.5" y="13" width="6" height="2" fill="#c8c8c8" stroke="#8c8c8c" stroke-width="0.9"/><path d="M11.5 1.5L15.5 5.5M15.5 1.5L11.5 5.5" stroke="#8c8c8c" stroke-width="1.1"/></svg>
<svg style="left:1041px;top:32px" width="16" height="15" viewBox="0 0 16 15"><path d="M4 4.5H16" stroke="#6c6c9c" stroke-width="1.1"/><path d="M4 7.5H16" stroke="#6c6c9c" stroke-width="1.1"/><path d="M4 10.5H16" stroke="#6c6c9c" stroke-width="1.1"/><path d="M4 13.5H16" stroke="#6c6c9c" stroke-width="1.1"/><path d="M0 3.2 H3.2 V1 L6.6 4.2 L3.2 7.4 V5.2 H0 Z" fill="#0030e0"/></svg>
<svg style="left:1064px;top:32px" width="16" height="15" viewBox="0 0 16 15"><path d="M4 4.5H16" stroke="#6c6c9c" stroke-width="1.1"/><path d="M4 7.5H16" stroke="#6c6c9c" stroke-width="1.1"/><path d="M4 10.5H16" stroke="#6c6c9c" stroke-width="1.1"/><path d="M4 13.5H16" stroke="#6c6c9c" stroke-width="1.1"/><path d="M2.2 7.6 V4.4 H0 L3.2 1 L6.4 4.4 H4.2 V7.6 Z" fill="#0030e0"/></svg>
<svg style="left:1087px;top:32px" width="16" height="15" viewBox="0 0 16 15"><path d="M4 4.5H16" stroke="#6c6c9c" stroke-width="1.1"/><path d="M4 7.5H16" stroke="#6c6c9c" stroke-width="1.1"/><path d="M4 10.5H16" stroke="#6c6c9c" stroke-width="1.1"/><path d="M4 13.5H16" stroke="#6c6c9c" stroke-width="1.1"/><path d="M2.2 7.5 V10.7 H0 L3.2 14.1 L6.4 10.7 H4.2 V7.5 Z" fill="#0030e0"/></svg>
<svg style="left:1110px;top:32px" width="16" height="15" viewBox="0 0 16 15"><path d="M4 4.5H16" stroke="#6c6c9c" stroke-width="1.1"/><path d="M4 7.5H16" stroke="#6c6c9c" stroke-width="1.1"/><path d="M4 10.5H16" stroke="#6c6c9c" stroke-width="1.1"/><path d="M4 13.5H16" stroke="#6c6c9c" stroke-width="1.1"/><path d="M0 10.2 H3.2 V8 L6.6 11.2 L3.2 14.4 V12.2 H0 Z" fill="#0030e0"/></svg>
<svg style="left:1147px;top:32px" width="15" height="14" viewBox="0 0 15 14"><path d="M5.5 1.2A6.2 6.2 0 1 1 2.8 11.6" stroke="#a8b0b4" stroke-width="1.5" fill="none"/><path d="M2.2 12.6L4.2 10.6" stroke="#c87828" stroke-width="1.8"/><path d="M4.8 3.2L13 11.4" stroke="#b06428" stroke-width="1.9"/><path d="M2.6 4.2L6.2 0.8L8 2.6L4.4 6Z" fill="#5a5a5a"/></svg>
<svg style="left:1169px;top:32px" width="16" height="14" viewBox="0 0 16 14"><rect x="0.4" y="5.8" width="9.2" height="4.6" fill="#1e7ce0"/><path d="M9.6 10.4V5L11 3.6H13.4L15.6 7V10.4Z" fill="#f09820"/><path d="M11.2 4.6H13L14.4 7H11.2Z" fill="#e4f0f8"/><rect x="0.4" y="10" width="15.2" height="1.2" fill="#3a3a3a"/><circle cx="3.6" cy="11.4" r="1.7" fill="#222"/><circle cx="12.2" cy="11.4" r="1.7" fill="#222"/><circle cx="3.6" cy="11.4" r="0.7" fill="#ddd"/><circle cx="12.2" cy="11.4" r="0.7" fill="#ddd"/><rect x="0" y="13" width="16" height="0.8" fill="#b8b8b8"/></svg>
<svg style="left:1192px;top:35.5px" width="16" height="8" viewBox="0 0 16 8"><rect x="0.3" y="5.4" width="3.6" height="2.2" rx="0.9" fill="#f06a10" stroke="#ffa860" stroke-width="0.4"/><rect x="4.3" y="5.4" width="3.6" height="2.2" rx="0.9" fill="#f06a10" stroke="#ffa860" stroke-width="0.4"/><rect x="8.3" y="5.4" width="3.6" height="2.2" rx="0.9" fill="#f06a10" stroke="#ffa860" stroke-width="0.4"/><rect x="12.3" y="5.4" width="3.6" height="2.2" rx="0.9" fill="#f06a10" stroke="#ffa860" stroke-width="0.4"/><rect x="2.3" y="3" width="3.6" height="2.2" rx="0.9" fill="#f06a10" stroke="#ffa860" stroke-width="0.4"/><rect x="6.3" y="3" width="3.6" height="2.2" rx="0.9" fill="#f06a10" stroke="#ffa860" stroke-width="0.4"/><rect x="10.3" y="3" width="3.6" height="2.2" rx="0.9" fill="#f06a10" stroke="#ffa860" stroke-width="0.4"/><rect x="4.3" y="0.6" width="3.6" height="2.2" rx="0.9" fill="#f06a10" stroke="#ffa860" stroke-width="0.4"/><rect x="8.3" y="0.6" width="3.6" height="2.2" rx="0.9" fill="#f06a10" stroke="#ffa860" stroke-width="0.4"/></svg>
<svg style="left:1221px;top:32px" width="16" height="14" viewBox="0 0 16 14"><path d="M1.5 6L3 3.2L5.5 2L8 3L9 6Z" fill="#e86818"/><circle cx="4" cy="3.6" r="0.8" fill="#ffb050"/><circle cx="6.4" cy="3.2" r="0.8" fill="#ffb050"/><rect x="0.4" y="5.8" width="9.2" height="4.6" fill="#1e7ce0"/><path d="M9.6 10.4V5L11 3.6H13.4L15.6 7V10.4Z" fill="#f09820"/><path d="M11.2 4.6H13L14.4 7H11.2Z" fill="#e4f0f8"/><rect x="0.4" y="10" width="15.2" height="1.2" fill="#3a3a3a"/><circle cx="3.6" cy="11.4" r="1.7" fill="#222"/><circle cx="12.2" cy="11.4" r="1.7" fill="#222"/><circle cx="3.6" cy="11.4" r="0.7" fill="#ddd"/><circle cx="12.2" cy="11.4" r="0.7" fill="#ddd"/><rect x="0" y="13" width="16" height="0.8" fill="#b8b8b8"/></svg>
<svg style="left:1257px;top:33px" width="16" height="14" viewBox="0 0 16 14"><path d="M0.5 8.6L3 6.6L15 7.6V10.6L7 13.2L0.5 11Z" fill="#fff" stroke="#f04858" stroke-width="1"/><path d="M0.5 8.4L7 10.6L15 7.6" stroke="#f04858" stroke-width="1.2" fill="none"/><path d="M2.2 3.6L4.6 5.8L4.6 8L12.6 6.6L14.4 4.2V6.4L12.6 8.6L4.6 9.8L2.2 7.4Z" fill="#fff" stroke="#e880a0" stroke-width="0.7"/><path d="M2.2 3.4L9.6 0.8L14.6 3.8L6.6 6.6Z" fill="#f050a8"/></svg>
<svg style="left:1280px;top:33px" width="16" height="14" viewBox="0 0 16 14"><path d="M0.5 8.6L3 6.6L15 7.6V10.6L7 13.2L0.5 11Z" fill="#fff" stroke="#38a8f0" stroke-width="1"/><path d="M0.5 8.4L7 10.6L15 7.6" stroke="#38a8f0" stroke-width="1.2" fill="none"/><path d="M2.2 3.6L4.6 5.8L4.6 8L12.6 6.6L14.4 4.2V6.4L12.6 8.6L4.6 9.8L2.2 7.4Z" fill="#fff" stroke="#5878e0" stroke-width="0.7"/><path d="M2.2 3.4L9.6 0.8L14.6 3.8L6.6 6.6Z" fill="#2850d8"/></svg>
<i style="left:72px;top:80px;width:1px;height:21px;background:#a0a0a0"></i><i style="left:73px;top:80px;width:1px;height:21px;background:#fff"></i>
<i style="left:124px;top:80px;width:1px;height:21px;background:#a0a0a0"></i><i style="left:125px;top:80px;width:1px;height:21px;background:#fff"></i>
<i style="left:408px;top:80px;width:1px;height:21px;background:#a0a0a0"></i><i style="left:409px;top:80px;width:1px;height:21px;background:#fff"></i>
<i style="left:483px;top:80px;width:1px;height:21px;background:#a0a0a0"></i><i style="left:484px;top:80px;width:1px;height:21px;background:#fff"></i>
<i style="left:604px;top:80px;width:1px;height:21px;background:#a0a0a0"></i><i style="left:605px;top:80px;width:1px;height:21px;background:#fff"></i>
<i style="left:633px;top:80px;width:1px;height:21px;background:#a0a0a0"></i><i style="left:634px;top:80px;width:1px;height:21px;background:#fff"></i>
<i style="left:777px;top:80px;width:1px;height:21px;background:#a0a0a0"></i><i style="left:778px;top:80px;width:1px;height:21px;background:#fff"></i>
<i style="left:806px;top:80px;width:1px;height:21px;background:#a0a0a0"></i><i style="left:807px;top:80px;width:1px;height:21px;background:#fff"></i>
<i style="left:835px;top:80px;width:1px;height:21px;background:#a0a0a0"></i><i style="left:836px;top:80px;width:1px;height:21px;background:#fff"></i>
<i style="left:889px;top:80px;width:1px;height:21px;background:#a0a0a0"></i><i style="left:890px;top:80px;width:1px;height:21px;background:#fff"></i>
<svg style="left:4px;top:82px" width="16" height="15" viewBox="0 0 16 15"><path d="M0.5 2.5H6L7.5 4.5H15.5V14.5H0.5Z" fill="url(#gGy)" stroke="#a8a8a8" stroke-width="1"/><path d="M0.5 7H15.5" stroke="#e8e8e8" stroke-width="0.8"/><rect x="9.6" y="0.2" width="6.2" height="6.2" fill="#d8d8d8"/><circle cx="12.7" cy="3.3" r="1.9" fill="#fff"/><circle cx="12.7" cy="3.3" r="0.7" fill="#d0d0d0"/></svg>
<svg style="left:28px;top:83px" width="15" height="15" viewBox="0 0 15 15"><path d="M0.5 3L3 0.5H10.5V14.5H0.5Z" fill="#f6f6f6" stroke="#9a9a9a" stroke-width="1"/><path d="M2.5 5.5H8.5M2.5 7.5H8.5M2.5 9.5H8.5M2.5 11.5H8.5" stroke="#8a8a8a" stroke-width="0.9"/><path d="M11.5 0V7M8 3.5H15M9 1L14 6M14 1L9 6" stroke="#d0d0d0" stroke-width="0.8"/></svg>
<svg style="left:51px;top:83.5px" width="14" height="13" viewBox="0 0 14 13"><path d="M1 1L13 12" stroke="#c4c4c4" stroke-width="1.6"/><path d="M13 1L9 4.6" stroke="#d0d0d0" stroke-width="1"/><path d="M6.4 7L1.4 11.8" stroke="#c4c4c4" stroke-width="2"/></svg>
<svg style="left:79px;top:82px" width="16" height="16" viewBox="0 0 16 16"><path d="M5.5 1.5H15.5V14H5.5Z" fill="url(#gD)" stroke="#5a5a5a" stroke-width="1"/><path d="M5.5 3.5L7.5 1.5" stroke="#333" stroke-width="0.8"/><path d="M0.5 6.5H12.5L13.5 15.5H2Z" fill="url(#gF)" stroke="#8a6a20" stroke-width="0.9"/><path d="M2.5 4H5.5V6.5H2.5Z" fill="#ffb820"/><path d="M8 11H12V9L16 12.2L12 15.4V13.4H8Z" fill="#1070f0"/></svg>
<svg style="left:102px;top:81px" width="16" height="16" viewBox="0 0 16 16"><path d="M2.5 3.5H8L9 5H15.5V12H2.5Z" fill="#ffe860" stroke="#b09040" stroke-width="0.8"/><path d="M0.5 6.5H4.5L7 9H11L13 6.5H14.5L15.8 15.5H2Z" fill="url(#gF)" stroke="#8a6a20" stroke-width="0.9"/><path d="M7.6 0H10V3.6H12.4L8.8 7.6L5.2 3.6H7.6Z" fill="#1070f0"/></svg>
<svg style="left:132px;top:83px" width="12" height="15" viewBox="0 0 12 15"><path d="M0.5 2.5L2.5 0.5H11.5V14.5H0.5Z" fill="#fff" stroke="#222" stroke-width="1"/><path d="M0.5 2.5H2.5V0.5" fill="none" stroke="#222" stroke-width="0.7"/><text x="6.2" y="12.4" font-family="Liberation Sans" font-weight="bold" font-size="10.5" fill="#1a8a30" text-anchor="middle">?</text></svg>
<svg style="left:364.5px;top:83px" width="13" height="15" viewBox="0 0 13 15"><path d="M3 2.5V13H5.5M3 5.5H6.5M3 9H6.5" stroke="#000" stroke-width="1.1" fill="none"/><rect x="0.5" y="0.8" width="6" height="2.3" rx="0.8" fill="#b8d4f4" stroke="#111" stroke-width="0.9"/><rect x="5.8" y="4.2" width="6" height="2.3" rx="0.8" fill="#b8d4f4" stroke="#111" stroke-width="0.9"/><rect x="5.8" y="7.8" width="6" height="2.3" rx="0.8" fill="#b8d4f4" stroke="#111" stroke-width="0.9"/><rect x="0.8" y="12" width="6" height="2.3" rx="0.8" fill="#b8d4f4" stroke="#111" stroke-width="0.9"/></svg>
<div style="left:383px;top:79px;width:23px;height:22px;background:#fafafa;border:1px solid;border-color:#a0a0a0 #fff #fff #a0a0a0"></div>
<svg style="left:387.5px;top:84px" width="16" height="15" viewBox="0 0 16 15"><rect x="3" y="0.5" width="2.2" height="4" fill="#e88a20"/><path d="M0.6 8L8 1L15.4 8" stroke="#b87838" stroke-width="1.3" fill="none"/><path d="M2.5 7.6L8 2.4L13.5 7.6V14.5H2.5Z" fill="#fff" stroke="#c8b8a0" stroke-width="0.6"/><rect x="4" y="8.8" width="2.6" height="5.7" fill="#f0a030"/><rect x="8.6" y="8" width="3.4" height="3.4" fill="#4a78f0"/><path d="M10.3 8V11.4M8.6 9.7H12" stroke="#cfe0ff" stroke-width="0.5"/></svg>
<svg style="left:415px;top:82.5px" width="16" height="14" viewBox="0 0 16 14"><path d="M0.5 1.5H5.5L7 3.5H15.5V13.5H0.5Z" fill="url(#gYf)" stroke="#c8a028" stroke-width="1"/><rect x="9.4" y="0.2" width="6.4" height="6.4" rx="1" fill="#f08020"/><circle cx="12.6" cy="3.4" r="1.9" fill="#fff"/><circle cx="12.6" cy="3.4" r="0.8" fill="#f08020"/></svg>
<svg style="left:438.5px;top:82.5px" width="15" height="15" viewBox="0 0 15 15"><path d="M0.5 3L3 0.5H11.5V15H0.5Z" fill="url(#gD)" stroke="#2a4a78" stroke-width="1"/><path d="M2.5 6.5H9.5M2.5 8.5H9.5M2.5 10.5H9.5M2.5 12.5H9.5" stroke="#3a5a88" stroke-width="0.9"/><path d="M11 0V8M7 4H15M8.2 1.2L13.8 6.8M13.8 1.2L8.2 6.8" stroke="#ffe000" stroke-width="1.3"/><circle cx="11" cy="4" r="1.8" fill="#fff870"/></svg>
<svg style="left:461.5px;top:83.5px" width="15" height="13" viewBox="0 0 15 13"><path d="M1.2 1.2L13.6 11.8" stroke="#f00010" stroke-width="2.2" stroke-linecap="round"/><path d="M13.4 1L1.6 12" stroke="#f00010" stroke-width="1.6" stroke-linecap="round"/></svg>
<svg style="left:490px;top:82px" width="16" height="16" viewBox="0 0 16 16"><rect x="0.5" y="0.5" width="12" height="10" rx="1" fill="#eaeaea" stroke="#a8a8a8" stroke-width="1"/><rect x="4" y="4.5" width="11.5" height="10.5" fill="#f4f4f4" stroke="#a8a8a8" stroke-width="1"/><rect x="6" y="7" width="2.4" height="2.4" fill="none" stroke="#8a8a8a" stroke-width="0.8"/><rect x="11" y="11" width="2.4" height="2.4" fill="none" stroke="#8a8a8a" stroke-width="0.8"/><path d="M12.5 6.5L7.5 13.5" stroke="#8a8a8a" stroke-width="0.9"/></svg>
<svg style="left:514px;top:83px" width="12" height="15" viewBox="0 0 12 15"><path d="M0.5 3L3 0.5H11.5V14.5H0.5Z" fill="#f4f4f4" stroke="#9a9a9a" stroke-width="1"/><path d="M2.5 5.5H9.5M2.5 7.5H9.5M2.5 9.5H9.5M2.5 11.5H9.5" stroke="#8a8a8a" stroke-width="0.9"/></svg>
<svg style="left:536px;top:82px" width="15" height="15" viewBox="0 0 15 15"><path d="M3.5 3L6 0.5H14.5V14.5H3.5Z" fill="url(#gGy)" stroke="#b0b0b0" stroke-width="1"/><rect x="0.5" y="7" width="9" height="2.6" fill="#dcdcdc" stroke="#b8b8b8" stroke-width="0.7"/></svg>
<svg style="left:559px;top:83px" width="16" height="14" viewBox="0 0 16 14"><path d="M0.5 0.5H5.5L7 2.5H15.5V13.5H0.5Z" fill="#d6d6d6" stroke="#a8a8a8" stroke-width="1"/><path d="M1 3H15" stroke="#e4e4e4" stroke-width="0.8"/></svg>
<svg style="left:582px;top:83px" width="16" height="14" viewBox="0 0 16 14"><path d="M0.5 0.5H5.5L7 2.5H15.5V13.5H0.5Z" fill="url(#gYf)" stroke="#e09a18" stroke-width="1"/><rect x="4" y="4.8" width="9" height="7" fill="#fff8e0" stroke="#a87820" stroke-width="0.8"/><path d="M10.8 6.2H6.4L8.6 8.3L6.4 10.4H10.8" stroke="#444" stroke-width="0.9" fill="none"/></svg>
<svg style="left:613.5px;top:83px" width="11" height="15" viewBox="0 0 11 15"><rect x="0.5" y="0.5" width="10" height="14" rx="1.5" fill="#e8d8c0" stroke="#a06a58" stroke-width="1"/><rect x="1.8" y="2" width="7.4" height="3" fill="#1f8a88"/><g fill="#fff8e8" stroke="#b09878" stroke-width="0.3"><rect x="1.8" y="6.2" width="1.8" height="1.5"/><rect x="1.8" y="8.4" width="1.8" height="1.5"/><rect x="1.8" y="10.6" width="1.8" height="1.5"/><rect x="1.8" y="12.6" width="1.8" height="1.5"/><rect x="4.6" y="6.2" width="1.8" height="1.5"/><rect x="4.6" y="8.4" width="1.8" height="1.5"/><rect x="4.6" y="10.6" width="1.8" height="1.5"/><rect x="4.6" y="12.6" width="1.8" height="1.5"/><rect x="7.4" y="6.2" width="1.8" height="1.5"/><rect x="7.4" y="8.4" width="1.8" height="1.5"/><rect x="7.4" y="10.6" width="1.8" height="1.5"/><rect x="7.4" y="12.6" width="1.8" height="1.5"/></g></svg>
<svg style="left:640px;top:83px" width="16" height="14" viewBox="0 0 16 14"><path d="M0.5 8.6L3 6.6L15 7.6V10.6L7 13.2L0.5 11Z" fill="#fff" stroke="#e84858" stroke-width="1"/><path d="M0.5 8.4L7 10.6L15 7.6" stroke="#e84858" stroke-width="1.2" fill="none"/><path d="M2.2 3.6L4.6 5.8L4.6 8L12.6 6.6L14.4 4.2V6.4L12.6 8.6L4.6 9.8L2.2 7.4Z" fill="#fff" stroke="#e86a98" stroke-width="0.7"/><path d="M2.2 3.4L9.6 0.8L14.6 3.8L6.6 6.6Z" fill="#f0389c"/></svg>
<svg style="left:663px;top:82.5px" width="17" height="16" viewBox="0 0 17 16"><path d="M0.5 9L7 13L14 8.5V11L7 15L0.5 11.2Z" fill="#e8eef8" stroke="#8aa0d0" stroke-width="0.6"/><path d="M0.5 9L5.5 1L15 3.6L7 13Z" fill="#3460e0"/><path d="M6.5 3.2L11.5 4.6" stroke="#9ab4ff" stroke-width="1.1"/><rect x="8.8" y="8" width="7.2" height="7.2" fill="#f8f8f8" stroke="#222" stroke-width="1"/><path d="M11 13.6V9.8H14M11 11.6H13.4" stroke="#222" stroke-width="1" fill="none"/></svg>
<svg style="left:687px;top:83px" width="14" height="14" viewBox="0 0 14 14"><rect x="0.7" y="0.7" width="12.8" height="12.8" fill="#f4f8f4" stroke="#3f7f3f" stroke-width="1.4"/><path d="M3 3.5H6L7.3 5.6L8.8 3.5H11.5L8.6 7.3L11.5 11H8.6L7.2 8.9L5.8 11H3L5.9 7.2Z" fill="#2e8b3a"/><path d="M3 3.5H6L7.3 5.6L5.9 7.2Z" fill="#58b060"/></svg>
<svg style="left:709px;top:82px" width="16" height="16" viewBox="0 0 16 16"><path d="M3.5 1H12L15.5 4V15H3.5Z" fill="#fff" stroke="#c8c8c8" stroke-width="0.7"/><rect x="0" y="1.8" width="14" height="5.6" fill="#e8101c"/><text x="7" y="6.6" font-family="Liberation Sans" font-weight="bold" font-size="5.6" fill="#fff" text-anchor="middle" letter-spacing="0.4">PDF</text><path d="M4.5 14.5C6 11.5 7.5 10 9.5 9.2C8 11 7.2 12.5 7 14.5ZM8 14.5C9.5 11.5 11 10 13.5 9C11.5 11 10.8 12.8 10.6 14.5ZM11.5 14.5C12 12.8 13 11.5 15 10.5V11.8C14 12.5 13.6 13.5 13.5 14.5Z" fill="#e8101c"/></svg>
<svg style="left:732px;top:82.5px" width="16" height="16" viewBox="0 0 16 16"><rect x="1.5" y="7" width="14" height="8.5" fill="#e8e8e8" stroke="#8a8a8a" stroke-width="0.8"/><rect x="9" y="0" width="6" height="3" fill="#7ab08a"/><rect x="2.6" y="1.2" width="13.4" height="6" fill="#1858e0"/><text x="9.6" y="6.2" font-family="Liberation Sans" font-weight="bold" font-size="5.6" fill="#fff" text-anchor="middle">XML</text><path d="M0 4L2 2L4 4L2 6Z" fill="#10d070"/><text x="8.6" y="14.4" font-family="Liberation Sans" font-weight="bold" font-size="6.6" fill="#000" text-anchor="middle">ГГЭ</text></svg>
<svg style="left:755px;top:82.5px" width="16" height="16" viewBox="0 0 16 16"><rect x="1.5" y="7" width="14" height="8.5" fill="#e8e8e8" stroke="#8a8a8a" stroke-width="0.8"/><rect x="9" y="0" width="6" height="3" fill="#7ab08a"/><rect x="2.6" y="1.2" width="13.4" height="6" fill="#1858e0"/><text x="9.6" y="6.2" font-family="Liberation Sans" font-weight="bold" font-size="5.6" fill="#fff" text-anchor="middle">XML</text><path d="M0 4L2 2L4 4L2 6Z" fill="#10d070"/><text x="8.6" y="14.4" font-family="Liberation Sans" font-weight="bold" font-size="6.6" fill="#000" text-anchor="middle">МГЭ</text></svg>
<svg style="left:783.5px;top:82.5px" width="17" height="16" viewBox="0 0 17 16"><path d="M0.5 9.5L7.5 13.5L15.5 8V10.5L7.5 15.5L0.5 12Z" fill="#f0e8e0" stroke="#c8a890" stroke-width="0.6"/><path d="M0.5 9.5L6 1L16 3.4L7.5 13.5Z" fill="#f07828"/><path d="M7.5 3.6L12.5 5" stroke="#ffe0c8" stroke-width="1.2"/></svg>
<svg style="left:813px;top:82px" width="16" height="16" viewBox="0 0 16 16"><rect x="0.5" y="0.5" width="12" height="10" rx="1" fill="#f0f0f0" stroke="#9a9a9a" stroke-width="1"/><rect x="4" y="4.5" width="11.5" height="10.5" fill="#fff" stroke="#8a8a8a" stroke-width="1"/><rect x="4.5" y="5" width="10.5" height="2" fill="#2a70e8"/><rect x="13.6" y="5" width="1.4" height="2" fill="#e83030"/><text x="9.8" y="14.2" font-family="Liberation Sans" font-weight="bold" font-size="7.6" fill="#333" text-anchor="middle">%</text></svg>
<svg style="left:845px;top:85px" width="10" height="10" viewBox="0 0 10 10"><path d="M5 0L10 5H7V10H3V5H0Z" fill="#8c8c8c"/></svg>
<svg style="left:868px;top:85px" width="10" height="10" viewBox="0 0 10 10"><path d="M5 10L10 5H7V0H3V5H0Z" fill="#8c8c8c"/></svg>
<span class="t" style="left:899.5px;top:82.5px;font-size:12px;line-height:15px;color:#000;transform:scaleX(0.872);">Вид ССР ЕРКР (ТСН-2001)</span>
</div>
</body></html>
